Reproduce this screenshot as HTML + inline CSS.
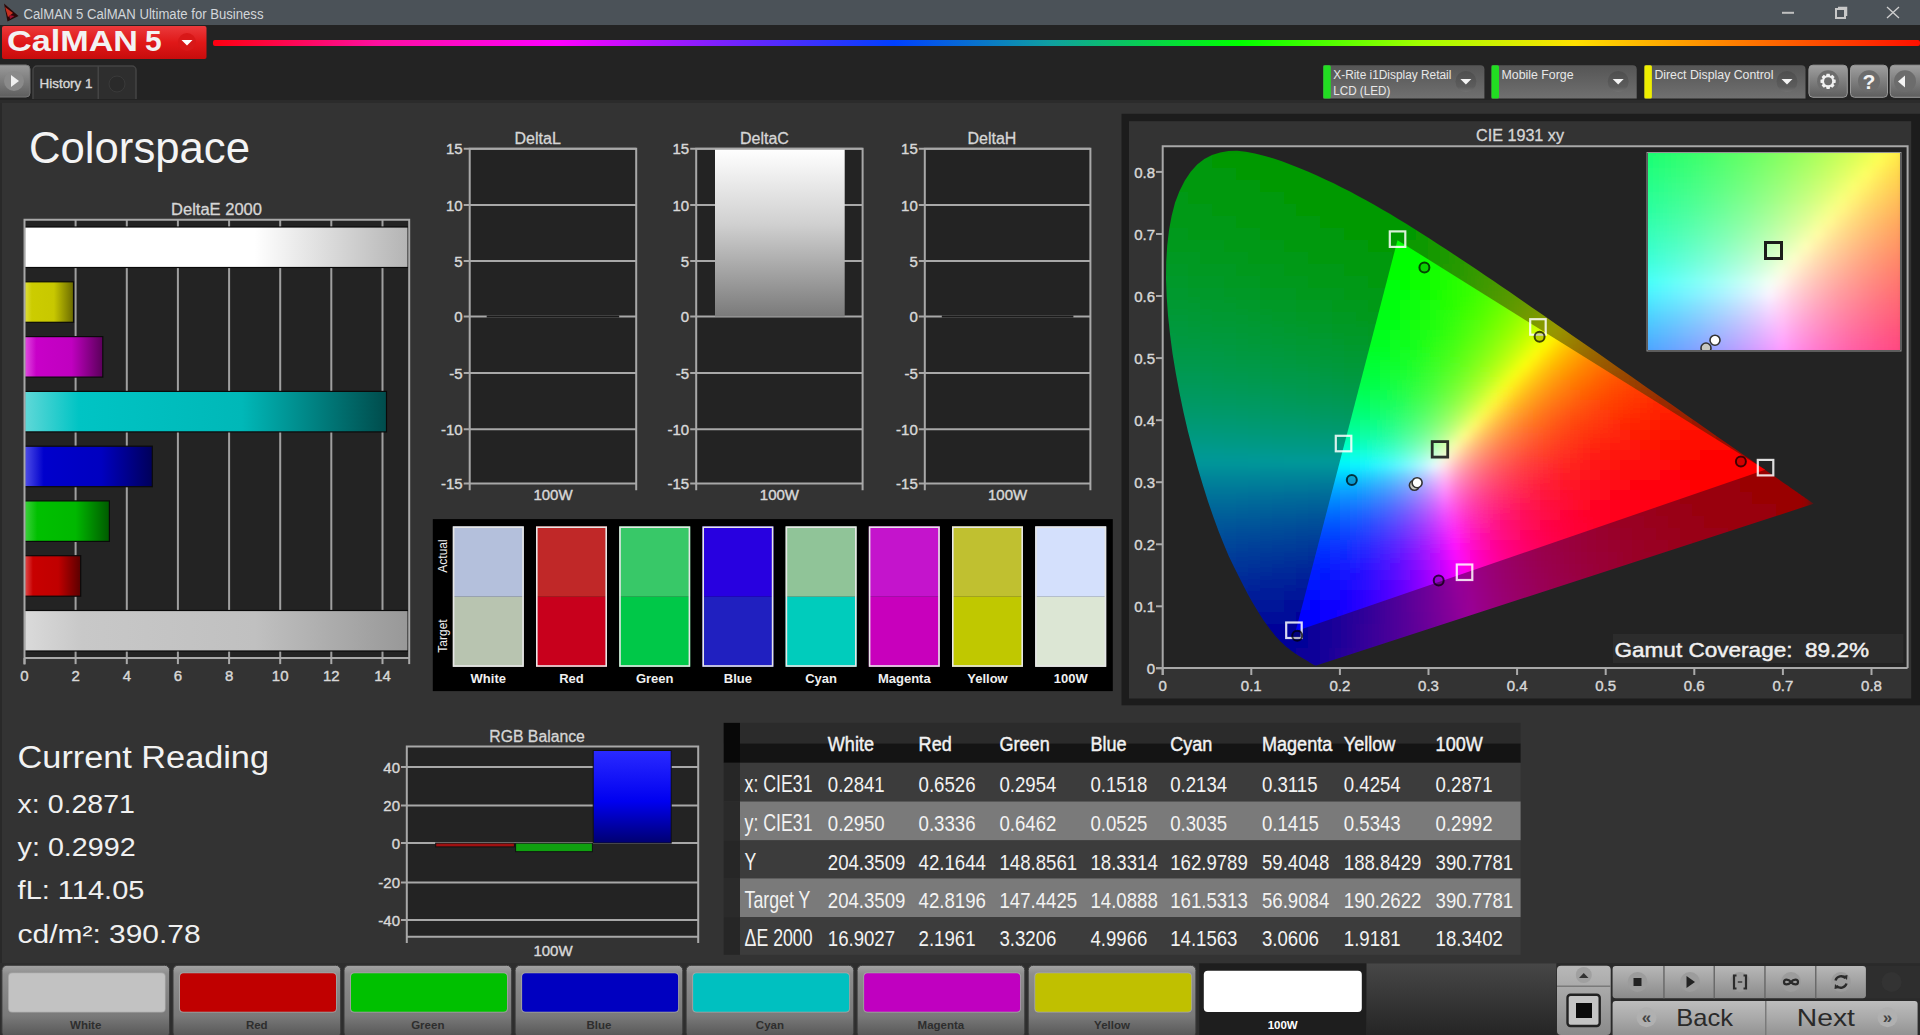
<!DOCTYPE html>
<html><head><meta charset="utf-8"><title>CalMAN</title>
<style>
html,body{margin:0;padding:0;background:#333;overflow:hidden;width:1920px;height:1035px}
svg{display:block;font-family:"Liberation Sans",sans-serif}
.ax{fill:#d8d8d8;font-size:15px;stroke:#d8d8d8;stroke-width:.4px}
.ttl{fill:#d6d6d6;font-size:16px;stroke:#d6d6d6;stroke-width:.3px}
.grid{stroke:#a8a8a8;stroke-width:2;fill:none}
.tb{fill:#f0f0f0;font-size:24px}
.bl{fill:#3a3a3a;font-size:11px;font-weight:bold}
</style></head><body>
<svg width="1920" height="1035" viewBox="0 0 1920 1035">
<defs>
<linearGradient id="spec" x1="213" y1="0" x2="1920" y2="0" gradientUnits="userSpaceOnUse">
<stop offset="0" stop-color="#ff0010"/><stop offset=".097" stop-color="#ff10a0"/><stop offset=".202" stop-color="#ff00ff"/><stop offset=".294" stop-color="#8020ff"/><stop offset=".399" stop-color="#0040ff"/><stop offset=".491" stop-color="#10a0a0"/><stop offset=".601" stop-color="#00ff00"/><stop offset=".706" stop-color="#a0ff00"/><stop offset=".798" stop-color="#ffe000"/><stop offset=".89" stop-color="#ff8000"/><stop offset="1" stop-color="#ff1000"/>
</linearGradient>
<linearGradient id="logoG" x1="0" y1="0" x2="0" y2="1"><stop offset="0" stop-color="#ea3a3c"/><stop offset=".5" stop-color="#e01818"/><stop offset="1" stop-color="#c80c0c"/></linearGradient>
<linearGradient id="btnG" x1="0" y1="0" x2="0" y2="1"><stop offset="0" stop-color="#9a9a9a"/><stop offset="1" stop-color="#5e5e5e"/></linearGradient>
<linearGradient id="ddG" x1="0" y1="0" x2="0" y2="1"><stop offset="0" stop-color="#5a5a5a"/><stop offset="1" stop-color="#6e6e6e"/></linearGradient>
</defs>

<!-- title bar -->
<rect x="0" y="0" width="1920" height="25.6" fill="#4b5258"/>
<path d="M4 3.5 L18.5 16 L7.5 21.5 Z" fill="#2a0808"/><path d="M5 7 L13 13 L8 17Z" fill="#c83020"/><path d="M9 15 L14.5 16 L10 19Z" fill="#a01030"/>
<text x="23.5" y="18.5" font-size="14" fill="#d2d6da" textLength="240" lengthAdjust="spacingAndGlyphs">CalMAN 5 CalMAN Ultimate for Business</text>
<rect x="1782" y="11.8" width="12" height="2" fill="#c0c0c0"/>
<rect x="1836" y="9" width="9" height="9" fill="none" stroke="#c8c8c8" stroke-width="2"/><path d="M1838 7.5h8.5v8.5" fill="none" stroke="#c8c8c8" stroke-width="1.5"/>
<path d="M1887 7 L1899 18 M1899 7 L1887 18" stroke="#d0d0d0" stroke-width="1.3"/>

<!-- logo bar -->
<rect x="0" y="25" width="1920" height="40" fill="#232323"/>
<rect x="2" y="26" width="204.5" height="33" rx="2" fill="url(#logoG)"/>
<text x="7" y="51" font-size="30" font-weight="bold" fill="#f2f2f2" textLength="131" lengthAdjust="spacingAndGlyphs">CalMAN</text>
<text x="145" y="51" font-size="30" font-weight="bold" fill="#f2f2f2">5</text>
<circle cx="187" cy="42" r="9" fill="#d81818"/>
<path d="M181.5 40 L192.5 40 L187 45.5Z" fill="#fff"/>
<rect x="213" y="40" width="1707" height="6" rx="2" fill="url(#spec)"/>

<!-- tab row -->
<rect x="0" y="65" width="1920" height="35" fill="#232323"/>
<rect x="0" y="100" width="1920" height="3" fill="#2b2b2b"/>
<rect x="-4" y="65" width="34" height="32" rx="4" fill="url(#btnG)" stroke="#777" stroke-width="1"/>
<circle cx="14" cy="81" r="10" fill="#8a8a8a"/>
<path d="M11 75 L19 81 L11 87Z" fill="#f0f0f0"/>
<path d="M33 99 V70 a4 4 0 0 1 4 -4 H132 a4 4 0 0 1 4 4 V99" fill="#2e2e2e" stroke="#444" stroke-width="1.5"/>
<rect x="97.5" y="66" width="1.5" height="33" fill="#444"/>
<text x="39.5" y="88" font-size="13" fill="#d8d8d8" stroke="#d8d8d8" stroke-width=".35" textLength="53" lengthAdjust="spacingAndGlyphs">History 1</text>
<circle cx="117" cy="84" r="8" fill="#2a2a2a" stroke="#3a3a3a" stroke-width="1"/>

<!-- content bg -->
<rect x="0" y="103" width="1920" height="860" fill="#333"/>
<rect x="0" y="103" width="2" height="860" fill="#292929"/>

<!-- Colorspace title -->
<text x="29" y="163" font-size="44" fill="#f4f4f4" textLength="221" lengthAdjust="spacingAndGlyphs">Colorspace</text>

<defs><linearGradient id="g_wh"><stop offset="0" stop-color="#ffffff"/><stop offset=".15" stop-color="#ffffff"/><stop offset=".6" stop-color="#ffffff"/><stop offset="1" stop-color="#b4b4b4"/></linearGradient><linearGradient id="g_ye"><stop offset="0" stop-color="#e0e040"/><stop offset=".15" stop-color="#cccc00"/><stop offset=".6" stop-color="#c8c800"/><stop offset="1" stop-color="#6a6a00"/></linearGradient><linearGradient id="g_ma"><stop offset="0" stop-color="#e050e0"/><stop offset=".15" stop-color="#c800c8"/><stop offset=".6" stop-color="#c000c0"/><stop offset="1" stop-color="#5a005a"/></linearGradient><linearGradient id="g_cy"><stop offset="0" stop-color="#60d8d8"/><stop offset=".15" stop-color="#00c4c4"/><stop offset=".6" stop-color="#00b8b8"/><stop offset="1" stop-color="#004c4c"/></linearGradient><linearGradient id="g_bu"><stop offset="0" stop-color="#5050e8"/><stop offset=".15" stop-color="#0000cc"/><stop offset=".6" stop-color="#0000c0"/><stop offset="1" stop-color="#00005a"/></linearGradient><linearGradient id="g_gr"><stop offset="0" stop-color="#40d040"/><stop offset=".15" stop-color="#00c000"/><stop offset=".6" stop-color="#00b800"/><stop offset="1" stop-color="#005a00"/></linearGradient><linearGradient id="g_re"><stop offset="0" stop-color="#e05050"/><stop offset=".15" stop-color="#c80000"/><stop offset=".6" stop-color="#c00000"/><stop offset="1" stop-color="#5a0000"/></linearGradient><linearGradient id="g_gy"><stop offset="0" stop-color="#dadada"/><stop offset=".15" stop-color="#c8c8c8"/><stop offset=".6" stop-color="#c0c0c0"/><stop offset="1" stop-color="#989898"/></linearGradient><linearGradient id="g_dc" x1="0" y1="0" x2="0" y2="1"><stop offset="0" stop-color="#ffffff"/><stop offset=".45" stop-color="#d0d0d0"/><stop offset="1" stop-color="#7a7a7a"/></linearGradient></defs><text class="ttl" x="171" y="215" textLength="91" lengthAdjust="spacingAndGlyphs">DeltaE 2000</text>
<rect x="24.5" y="219.8" width="384.7" height="438.3" fill="#232323"/>
<rect x="74.6" y="219.8" width="2" height="438.3" fill="#a0a0a0"/>
<rect x="125.8" y="219.8" width="2" height="438.3" fill="#a0a0a0"/>
<rect x="176.9" y="219.8" width="2" height="438.3" fill="#a0a0a0"/>
<rect x="228.1" y="219.8" width="2" height="438.3" fill="#a0a0a0"/>
<rect x="279.2" y="219.8" width="2" height="438.3" fill="#a0a0a0"/>
<rect x="330.3" y="219.8" width="2" height="438.3" fill="#a0a0a0"/>
<rect x="381.5" y="219.8" width="2" height="438.3" fill="#a0a0a0"/>
<rect x="24.5" y="227.0" width="383.6" height="40.5" fill="url(#g_wh)" stroke="#0a0a0a" stroke-width="1.2"/>
<rect x="24.5" y="281.8" width="49.0" height="40.5" fill="url(#g_ye)" stroke="#0a0a0a" stroke-width="1.2"/>
<rect x="24.5" y="336.6" width="78.3" height="40.5" fill="url(#g_ma)" stroke="#0a0a0a" stroke-width="1.2"/>
<rect x="24.5" y="391.4" width="362.0" height="40.5" fill="url(#g_cy)" stroke="#0a0a0a" stroke-width="1.2"/>
<rect x="24.5" y="446.2" width="127.8" height="40.5" fill="url(#g_bu)" stroke="#0a0a0a" stroke-width="1.2"/>
<rect x="24.5" y="500.9" width="84.9" height="40.5" fill="url(#g_gr)" stroke="#0a0a0a" stroke-width="1.2"/>
<rect x="24.5" y="555.7" width="56.2" height="40.5" fill="url(#g_re)" stroke="#0a0a0a" stroke-width="1.2"/>
<rect x="24.5" y="610.5" width="383.6" height="40.5" fill="url(#g_gy)" stroke="#0a0a0a" stroke-width="1.2"/>
<path d="M24.5 664.5 V219.8 H409.2 V658.1" class="grid"/>
<path d="M24.5 658.1 H409.2" class="grid"/>
<rect x="23.5" y="658.1" width="2" height="6" fill="#aaa"/>
<text class="ax" x="24.5" y="681.3" text-anchor="middle">0</text>
<rect x="74.6" y="658.1" width="2" height="6" fill="#aaa"/>
<text class="ax" x="75.6" y="681.3" text-anchor="middle">2</text>
<rect x="125.8" y="658.1" width="2" height="6" fill="#aaa"/>
<text class="ax" x="126.8" y="681.3" text-anchor="middle">4</text>
<rect x="176.9" y="658.1" width="2" height="6" fill="#aaa"/>
<text class="ax" x="177.9" y="681.3" text-anchor="middle">6</text>
<rect x="228.1" y="658.1" width="2" height="6" fill="#aaa"/>
<text class="ax" x="229.1" y="681.3" text-anchor="middle">8</text>
<rect x="279.2" y="658.1" width="2" height="6" fill="#aaa"/>
<text class="ax" x="280.2" y="681.3" text-anchor="middle">10</text>
<rect x="330.3" y="658.1" width="2" height="6" fill="#aaa"/>
<text class="ax" x="331.3" y="681.3" text-anchor="middle">12</text>
<rect x="381.5" y="658.1" width="2" height="6" fill="#aaa"/>
<text class="ax" x="382.5" y="681.3" text-anchor="middle">14</text>
<rect x="408.2" y="658.1" width="2" height="6" fill="#aaa"/>
<text class="ttl" x="537.7" y="143.7" text-anchor="middle">DeltaL</text>
<rect x="469.7" y="148.8" width="166.5" height="334.6" fill="#232323"/>
<path d="M463.7 148.8 H636.2" class="grid"/>
<text class="ax" x="462.7" y="154.3" text-anchor="end">15</text>
<path d="M463.7 205.0 H636.2" class="grid"/>
<text class="ax" x="462.7" y="210.5" text-anchor="end">10</text>
<path d="M463.7 261.0 H636.2" class="grid"/>
<text class="ax" x="462.7" y="266.5" text-anchor="end">5</text>
<path d="M463.7 316.5 H636.2" class="grid"/>
<text class="ax" x="462.7" y="322.0" text-anchor="end">0</text>
<path d="M463.7 373.0 H636.2" class="grid"/>
<text class="ax" x="462.7" y="378.5" text-anchor="end">-5</text>
<path d="M463.7 429.2 H636.2" class="grid"/>
<text class="ax" x="462.7" y="434.7" text-anchor="end">-10</text>
<path d="M463.7 483.4 H636.2" class="grid"/>
<text class="ax" x="462.7" y="488.9" text-anchor="end">-15</text>
<rect x="486.7" y="315.5" width="132.5" height="2" fill="#1a1a1a"/>
<path d="M469.7 490.3 V148.8 H636.2 V490.3" class="grid"/>
<text class="ax" x="553.0" y="500.4" text-anchor="middle">100W</text>
<text class="ttl" x="764.4" y="143.7" text-anchor="middle">DeltaC</text>
<rect x="696.2" y="148.8" width="166.4" height="334.6" fill="#232323"/>
<path d="M690.2 148.8 H862.6" class="grid"/>
<text class="ax" x="689.2" y="154.3" text-anchor="end">15</text>
<path d="M690.2 205.0 H862.6" class="grid"/>
<text class="ax" x="689.2" y="210.5" text-anchor="end">10</text>
<path d="M690.2 261.0 H862.6" class="grid"/>
<text class="ax" x="689.2" y="266.5" text-anchor="end">5</text>
<path d="M690.2 316.5 H862.6" class="grid"/>
<text class="ax" x="689.2" y="322.0" text-anchor="end">0</text>
<path d="M690.2 373.0 H862.6" class="grid"/>
<text class="ax" x="689.2" y="378.5" text-anchor="end">-5</text>
<path d="M690.2 429.2 H862.6" class="grid"/>
<text class="ax" x="689.2" y="434.7" text-anchor="end">-10</text>
<path d="M690.2 483.4 H862.6" class="grid"/>
<text class="ax" x="689.2" y="488.9" text-anchor="end">-15</text>
<rect x="715" y="148.8" width="129.7" height="167.7" fill="url(#g_dc)"/>
<path d="M696.2 490.3 V148.8 H862.6 V490.3" class="grid"/>
<text class="ax" x="779.4" y="500.4" text-anchor="middle">100W</text>
<text class="ttl" x="991.9" y="143.7" text-anchor="middle">DeltaH</text>
<rect x="924.8" y="148.8" width="165.6" height="334.6" fill="#232323"/>
<path d="M918.8 148.8 H1090.4" class="grid"/>
<text class="ax" x="917.8" y="154.3" text-anchor="end">15</text>
<path d="M918.8 205.0 H1090.4" class="grid"/>
<text class="ax" x="917.8" y="210.5" text-anchor="end">10</text>
<path d="M918.8 261.0 H1090.4" class="grid"/>
<text class="ax" x="917.8" y="266.5" text-anchor="end">5</text>
<path d="M918.8 316.5 H1090.4" class="grid"/>
<text class="ax" x="917.8" y="322.0" text-anchor="end">0</text>
<path d="M918.8 373.0 H1090.4" class="grid"/>
<text class="ax" x="917.8" y="378.5" text-anchor="end">-5</text>
<path d="M918.8 429.2 H1090.4" class="grid"/>
<text class="ax" x="917.8" y="434.7" text-anchor="end">-10</text>
<path d="M918.8 483.4 H1090.4" class="grid"/>
<text class="ax" x="917.8" y="488.9" text-anchor="end">-15</text>
<rect x="941.8" y="315.5" width="131.6" height="2" fill="#1a1a1a"/>
<path d="M924.8 490.3 V148.8 H1090.4 V490.3" class="grid"/>
<text class="ax" x="1007.6" y="500.4" text-anchor="middle">100W</text>
<rect x="432.8" y="519.1" width="680" height="172" fill="#000"/>
<rect x="452.8" y="526.4" width="71" height="70.4" fill="#b4c0dc"/>
<rect x="452.8" y="596.8" width="71" height="70" fill="#b8c4b0"/>
<rect x="453.6" y="527.2" width="69.4" height="138.8" fill="none" stroke="#e6e6e6" stroke-width="1.6"/>
<text x="488.3" y="683" font-size="13" font-weight="bold" fill="#f0f0f0" text-anchor="middle">White</text>
<rect x="536.0" y="526.4" width="71" height="70.4" fill="#c02828"/>
<rect x="536.0" y="596.8" width="71" height="70" fill="#c8001c"/>
<rect x="536.8" y="527.2" width="69.4" height="138.8" fill="none" stroke="#e6e6e6" stroke-width="1.6"/>
<text x="571.5" y="683" font-size="13" font-weight="bold" fill="#f0f0f0" text-anchor="middle">Red</text>
<rect x="619.2" y="526.4" width="71" height="70.4" fill="#38c868"/>
<rect x="619.2" y="596.8" width="71" height="70" fill="#00c848"/>
<rect x="620.0" y="527.2" width="69.4" height="138.8" fill="none" stroke="#e6e6e6" stroke-width="1.6"/>
<text x="654.7" y="683" font-size="13" font-weight="bold" fill="#f0f0f0" text-anchor="middle">Green</text>
<rect x="702.4" y="526.4" width="71" height="70.4" fill="#2800e0"/>
<rect x="702.4" y="596.8" width="71" height="70" fill="#2020c0"/>
<rect x="703.2" y="527.2" width="69.4" height="138.8" fill="none" stroke="#e6e6e6" stroke-width="1.6"/>
<text x="737.9" y="683" font-size="13" font-weight="bold" fill="#f0f0f0" text-anchor="middle">Blue</text>
<rect x="785.6" y="526.4" width="71" height="70.4" fill="#90c498"/>
<rect x="785.6" y="596.8" width="71" height="70" fill="#00ccbc"/>
<rect x="786.4" y="527.2" width="69.4" height="138.8" fill="none" stroke="#e6e6e6" stroke-width="1.6"/>
<text x="821.1" y="683" font-size="13" font-weight="bold" fill="#f0f0f0" text-anchor="middle">Cyan</text>
<rect x="868.8" y="526.4" width="71" height="70.4" fill="#c414cc"/>
<rect x="868.8" y="596.8" width="71" height="70" fill="#c800bc"/>
<rect x="869.6" y="527.2" width="69.4" height="138.8" fill="none" stroke="#e6e6e6" stroke-width="1.6"/>
<text x="904.3" y="683" font-size="13" font-weight="bold" fill="#f0f0f0" text-anchor="middle">Magenta</text>
<rect x="952.0" y="526.4" width="71" height="70.4" fill="#c0c030"/>
<rect x="952.0" y="596.8" width="71" height="70" fill="#c0c800"/>
<rect x="952.8" y="527.2" width="69.4" height="138.8" fill="none" stroke="#e6e6e6" stroke-width="1.6"/>
<text x="987.5" y="683" font-size="13" font-weight="bold" fill="#f0f0f0" text-anchor="middle">Yellow</text>
<rect x="1035.2" y="526.4" width="71" height="70.4" fill="#d4e0fc"/>
<rect x="1035.2" y="596.8" width="71" height="70" fill="#dce6d4"/>
<rect x="1036.0" y="527.2" width="69.4" height="138.8" fill="none" stroke="#e6e6e6" stroke-width="1.6"/>
<text x="1070.7" y="683" font-size="13" font-weight="bold" fill="#f0f0f0" text-anchor="middle">100W</text>
<text transform="translate(447,556) rotate(-90)" font-size="12" fill="#f0f0f0" text-anchor="middle">Actual</text>
<text transform="translate(447,636) rotate(-90)" font-size="12" fill="#f0f0f0" text-anchor="middle">Target</text><rect x="1121.5" y="113.8" width="798.5" height="591.5" fill="#1c1c1c"/>
<rect x="1129" y="121.2" width="782.2" height="577.3" fill="#333"/>
<text class="ttl" x="1476" y="141.3" textLength="88" lengthAdjust="spacingAndGlyphs">CIE 1931 xy</text>
<rect x="1162.7" y="146.3" width="745" height="521.8" fill="#232323"/>
<defs><clipPath id="clLoc"><path d="M1317.0 665.3L1316.9 665.3L1316.9 665.3L1316.9 665.3L1316.9 665.3L1316.8 665.3L1316.8 665.3L1316.7 665.3L1316.7 665.4L1316.6 665.4L1316.6 665.4L1316.6 665.4L1316.5 665.4L1316.4 665.4L1316.4 665.4L1316.3 665.4L1316.2 665.4L1316.2 665.4L1316.1 665.4L1316.1 665.4L1316.0 665.4L1315.9 665.4L1315.8 665.4L1315.7 665.4L1315.6 665.4L1315.5 665.4L1315.4 665.4L1315.3 665.4L1315.2 665.4L1315.0 665.4L1314.9 665.4L1314.7 665.3L1314.6 665.2L1314.3 665.1L1314.1 665.0L1313.9 664.9L1313.6 664.8L1313.3 664.7L1313.0 664.5L1312.7 664.3L1312.3 664.1L1312.0 663.9L1311.5 663.6L1311.1 663.4L1310.6 663.1L1310.1 662.7L1309.5 662.4L1309.0 662.0L1308.4 661.6L1307.7 661.2L1307.0 660.8L1306.3 660.3L1305.4 659.8L1304.5 659.3L1303.6 658.7L1302.5 658.1L1301.4 657.4L1300.3 656.7L1299.1 656.0L1297.8 655.2L1296.5 654.3L1295.1 653.4L1293.5 652.3L1292.0 651.2L1290.3 650.0L1288.6 648.6L1286.8 647.2L1284.8 645.6L1282.8 643.6L1280.5 641.4L1278.0 638.8L1275.4 635.9L1272.7 632.5L1269.7 628.8L1266.6 624.6L1263.3 619.9L1259.8 614.5L1256.1 608.5L1252.1 601.8L1248.0 594.4L1243.6 586.0L1238.9 576.8L1233.9 566.8L1228.7 555.9L1223.6 543.8L1218.4 530.7L1213.2 516.5L1208.0 501.4L1202.9 485.3L1197.8 468.2L1192.8 450.0L1187.9 431.2L1183.5 412.3L1179.5 393.0L1175.8 373.2L1172.5 353.5L1170.0 334.3L1168.0 315.5L1166.7 297.0L1166.0 279.0L1166.2 262.0L1167.2 245.8L1169.0 230.3L1171.6 215.9L1175.0 202.8L1179.4 191.2L1184.7 180.8L1190.7 171.8L1197.2 164.5L1204.3 158.9L1212.0 155.0L1220.2 152.5L1228.5 150.9L1237.1 150.7L1245.9 151.7L1254.9 153.5L1263.9 155.7L1272.9 158.2L1281.9 161.3L1290.9 164.7L1299.8 168.3L1308.4 171.8L1316.9 175.5L1325.3 179.4L1333.6 183.3L1341.8 187.4L1350.0 191.6L1358.1 195.9L1366.1 200.3L1374.2 204.8L1382.2 209.4L1390.2 214.1L1398.2 218.9L1406.2 223.8L1414.1 228.7L1422.0 233.7L1429.9 238.8L1437.8 243.9L1445.7 249.0L1453.6 254.2L1461.5 259.5L1469.5 264.8L1477.4 270.1L1485.3 275.5L1493.3 280.8L1501.2 286.2L1509.1 291.6L1516.9 297.1L1524.8 302.5L1532.7 307.9L1540.5 313.3L1548.4 318.8L1556.2 324.2L1563.9 329.5L1571.6 334.9L1579.3 340.3L1586.9 345.6L1594.5 350.8L1602.0 356.1L1609.4 361.3L1616.8 366.4L1624.1 371.5L1631.3 376.5L1638.4 381.5L1645.4 386.4L1652.3 391.2L1659.1 395.9L1665.8 400.6L1672.3 405.1L1678.7 409.6L1684.9 414.0L1691.0 418.2L1696.9 422.3L1702.5 426.3L1707.9 430.0L1713.1 433.7L1718.2 437.2L1723.2 440.7L1728.0 444.0L1732.6 447.3L1737.0 450.3L1741.2 453.2L1745.2 456.0L1749.0 458.6L1752.6 461.1L1756.0 463.5L1759.3 465.8L1762.4 467.9L1765.3 470.0L1768.0 471.9L1770.6 473.7L1773.0 475.4L1775.4 477.1L1777.6 478.6L1779.6 480.0L1781.6 481.4L1783.4 482.7L1785.2 483.9L1786.8 485.0L1788.4 486.1L1789.9 487.2L1791.3 488.2L1792.7 489.2L1794.0 490.1L1795.3 491.0L1796.5 491.8L1797.6 492.6L1798.7 493.4L1799.7 494.1L1800.7 494.7L1801.6 495.4L1802.5 495.9L1803.3 496.5L1804.0 497.0L1804.7 497.5L1805.3 497.9L1805.9 498.4L1806.5 498.8L1807.0 499.1L1807.5 499.5L1808.0 499.8L1808.4 500.1L1808.8 500.4L1809.2 500.6L1809.5 500.8L1809.8 501.0L1810.0 501.2L1810.2 501.4L1810.5 501.5L1810.7 501.7L1810.9 501.8L1811.1 502.0L1811.3 502.1L1811.4 502.2L1811.6 502.3L1811.7 502.4L1811.9 502.5L1812.0 502.6L1812.2 502.7L1812.3 502.8L1812.5 502.9L1812.6 503.0L1812.8 503.1L1812.9 503.2L1813.0 503.3L1813.1 503.4L1813.2 503.5L1813.3 503.5L1813.4 503.6L1813.4 503.6L1813.5 503.6L1813.5 503.7L1813.6 503.7L1813.6 503.7L1813.6 503.7L1813.6 503.7L1813.6 503.8Z"/></clipPath><clipPath id="clTri"><path d="M1765.2 469.8L1397.5 240.2L1295.6 631.2Z"/></clipPath><filter id="bl12" x="-5%" y="-5%" width="110%" height="110%"><feGaussianBlur stdDeviation="5"/></filter><filter id="bl8" x="-5%" y="-5%" width="110%" height="110%"><feGaussianBlur stdDeviation="5"/></filter><clipPath id="clIns"><rect x="1648" y="153" width="252" height="197"/></clipPath><style>.o rect{width:12px;height:12px}.i rect{width:10px;height:10px}.n rect{width:12px;height:12px}</style></defs><g clip-path="url(#clLoc)"><g class="o" filter="url(#bl12)"><rect x="1188" y="144" fill="#009906"/><rect x="1200" y="144" fill="#009905"/><rect x="1212" y="144" fill="#009904"/><rect x="1224" y="144" fill="#009903"/><rect x="1236" y="144" fill="#009901"/><rect x="1248" y="144" fill="#009900"/><rect x="1260" y="144" fill="#009900"/><rect x="1272" y="144" fill="#009900"/><rect x="1284" y="144" fill="#009900"/><rect x="1176" y="156" fill="#00990a"/><rect x="1188" y="156" fill="#009909"/><rect x="1200" y="156" fill="#009908"/><rect x="1212" y="156" fill="#009906"/><rect x="1224" y="156" fill="#009905"/><rect x="1236" y="156" fill="#009904"/><rect x="1248" y="156" fill="#009902"/><rect x="1260" y="156" fill="#009901"/><rect x="1272" y="156" fill="#009900"/><rect x="1284" y="156" fill="#009900"/><rect x="1296" y="156" fill="#009900"/><rect x="1308" y="156" fill="#009900"/><rect x="1176" y="168" fill="#00990d"/><rect x="1188" y="168" fill="#00990b"/><rect x="1200" y="168" fill="#00990a"/><rect x="1212" y="168" fill="#009909"/><rect x="1224" y="168" fill="#009907"/><rect x="1236" y="168" fill="#009906"/><rect x="1248" y="168" fill="#009905"/><rect x="1260" y="168" fill="#009903"/><rect x="1272" y="168" fill="#009902"/><rect x="1284" y="168" fill="#009900"/><rect x="1296" y="168" fill="#009900"/><rect x="1308" y="168" fill="#009900"/><rect x="1320" y="168" fill="#009900"/><rect x="1332" y="168" fill="#009900"/><rect x="1344" y="168" fill="#009900"/><rect x="1164" y="180" fill="#009910"/><rect x="1176" y="180" fill="#00990f"/><rect x="1188" y="180" fill="#00990e"/><rect x="1200" y="180" fill="#00990c"/><rect x="1212" y="180" fill="#00990b"/><rect x="1224" y="180" fill="#00990a"/><rect x="1236" y="180" fill="#009908"/><rect x="1248" y="180" fill="#009907"/><rect x="1260" y="180" fill="#009906"/><rect x="1272" y="180" fill="#009904"/><rect x="1284" y="180" fill="#009903"/><rect x="1296" y="180" fill="#009901"/><rect x="1308" y="180" fill="#009900"/><rect x="1320" y="180" fill="#009900"/><rect x="1332" y="180" fill="#009900"/><rect x="1344" y="180" fill="#009900"/><rect x="1356" y="180" fill="#009900"/><rect x="1164" y="192" fill="#009913"/><rect x="1176" y="192" fill="#009912"/><rect x="1188" y="192" fill="#009910"/><rect x="1200" y="192" fill="#00990f"/><rect x="1212" y="192" fill="#00990e"/><rect x="1224" y="192" fill="#00990c"/><rect x="1236" y="192" fill="#00990b"/><rect x="1248" y="192" fill="#00990a"/><rect x="1260" y="192" fill="#009908"/><rect x="1272" y="192" fill="#009907"/><rect x="1284" y="192" fill="#009905"/><rect x="1296" y="192" fill="#009904"/><rect x="1308" y="192" fill="#009902"/><rect x="1320" y="192" fill="#009901"/><rect x="1332" y="192" fill="#009900"/><rect x="1344" y="192" fill="#009900"/><rect x="1356" y="192" fill="#009900"/><rect x="1368" y="192" fill="#009900"/><rect x="1380" y="192" fill="#009900"/><rect x="1164" y="204" fill="#009916"/><rect x="1176" y="204" fill="#009915"/><rect x="1188" y="204" fill="#009913"/><rect x="1200" y="204" fill="#009912"/><rect x="1212" y="204" fill="#009911"/><rect x="1224" y="204" fill="#00990f"/><rect x="1236" y="204" fill="#00990e"/><rect x="1248" y="204" fill="#00990c"/><rect x="1260" y="204" fill="#00990b"/><rect x="1272" y="204" fill="#009909"/><rect x="1284" y="204" fill="#009908"/><rect x="1296" y="204" fill="#009906"/><rect x="1308" y="204" fill="#009905"/><rect x="1320" y="204" fill="#009903"/><rect x="1332" y="204" fill="#009902"/><rect x="1344" y="204" fill="#009900"/><rect x="1356" y="204" fill="#009900"/><rect x="1368" y="204" fill="#009900"/><rect x="1380" y="204" fill="#009900"/><rect x="1392" y="204" fill="#009900"/><rect x="1404" y="204" fill="#029900"/><rect x="1152" y="216" fill="#00991a"/><rect x="1164" y="216" fill="#009919"/><rect x="1176" y="216" fill="#009918"/><rect x="1188" y="216" fill="#009916"/><rect x="1200" y="216" fill="#009915"/><rect x="1212" y="216" fill="#009914"/><rect x="1224" y="216" fill="#009912"/><rect x="1236" y="216" fill="#009911"/><rect x="1248" y="216" fill="#00990f"/><rect x="1260" y="216" fill="#00990e"/><rect x="1272" y="216" fill="#00990c"/><rect x="1284" y="216" fill="#00990b"/><rect x="1296" y="216" fill="#009909"/><rect x="1308" y="216" fill="#009908"/><rect x="1320" y="216" fill="#009906"/><rect x="1332" y="216" fill="#009904"/><rect x="1344" y="216" fill="#009903"/><rect x="1356" y="216" fill="#009901"/><rect x="1368" y="216" fill="#009900"/><rect x="1380" y="216" fill="#009900"/><rect x="1392" y="216" fill="#009900"/><rect x="1404" y="216" fill="#049900"/><rect x="1416" y="216" fill="#0a9900"/><rect x="1428" y="216" fill="#109900"/><rect x="1152" y="228" fill="#00991d"/><rect x="1164" y="228" fill="#00991c"/><rect x="1176" y="228" fill="#00991b"/><rect x="1188" y="228" fill="#009919"/><rect x="1200" y="228" fill="#009918"/><rect x="1212" y="228" fill="#009917"/><rect x="1224" y="228" fill="#009915"/><rect x="1236" y="228" fill="#009914"/><rect x="1248" y="228" fill="#009912"/><rect x="1260" y="228" fill="#009911"/><rect x="1272" y="228" fill="#00990f"/><rect x="1284" y="228" fill="#00990e"/><rect x="1296" y="228" fill="#00990c"/><rect x="1308" y="228" fill="#00990b"/><rect x="1320" y="228" fill="#009909"/><rect x="1332" y="228" fill="#009907"/><rect x="1344" y="228" fill="#009906"/><rect x="1356" y="228" fill="#009904"/><rect x="1368" y="228" fill="#009902"/><rect x="1380" y="228" fill="#009900"/><rect x="1392" y="228" fill="#009900"/><rect x="1404" y="228" fill="#059900"/><rect x="1416" y="228" fill="#0c9900"/><rect x="1428" y="228" fill="#129900"/><rect x="1440" y="228" fill="#189900"/><rect x="1152" y="240" fill="#009921"/><rect x="1164" y="240" fill="#00991f"/><rect x="1176" y="240" fill="#00991e"/><rect x="1188" y="240" fill="#00991d"/><rect x="1200" y="240" fill="#00991b"/><rect x="1212" y="240" fill="#00991a"/><rect x="1224" y="240" fill="#009919"/><rect x="1236" y="240" fill="#009917"/><rect x="1248" y="240" fill="#009916"/><rect x="1260" y="240" fill="#009914"/><rect x="1272" y="240" fill="#009913"/><rect x="1284" y="240" fill="#009911"/><rect x="1296" y="240" fill="#009910"/><rect x="1308" y="240" fill="#00990e"/><rect x="1320" y="240" fill="#00990c"/><rect x="1332" y="240" fill="#00990b"/><rect x="1344" y="240" fill="#009909"/><rect x="1356" y="240" fill="#009907"/><rect x="1368" y="240" fill="#009905"/><rect x="1380" y="240" fill="#009903"/><rect x="1392" y="240" fill="#019901"/><rect x="1404" y="240" fill="#079900"/><rect x="1416" y="240" fill="#0e9900"/><rect x="1428" y="240" fill="#149900"/><rect x="1440" y="240" fill="#1b9900"/><rect x="1452" y="240" fill="#229900"/><rect x="1464" y="240" fill="#299900"/><rect x="1152" y="252" fill="#009924"/><rect x="1164" y="252" fill="#009923"/><rect x="1176" y="252" fill="#009922"/><rect x="1188" y="252" fill="#009920"/><rect x="1200" y="252" fill="#00991f"/><rect x="1212" y="252" fill="#00991e"/><rect x="1224" y="252" fill="#00991c"/><rect x="1236" y="252" fill="#00991b"/><rect x="1248" y="252" fill="#009919"/><rect x="1260" y="252" fill="#009918"/><rect x="1272" y="252" fill="#009916"/><rect x="1284" y="252" fill="#009915"/><rect x="1296" y="252" fill="#009913"/><rect x="1308" y="252" fill="#009911"/><rect x="1320" y="252" fill="#009910"/><rect x="1332" y="252" fill="#00990e"/><rect x="1344" y="252" fill="#00990c"/><rect x="1356" y="252" fill="#00990a"/><rect x="1368" y="252" fill="#009909"/><rect x="1380" y="252" fill="#009907"/><rect x="1392" y="252" fill="#039905"/><rect x="1404" y="252" fill="#099903"/><rect x="1416" y="252" fill="#109901"/><rect x="1428" y="252" fill="#179900"/><rect x="1440" y="252" fill="#1e9900"/><rect x="1452" y="252" fill="#259900"/><rect x="1464" y="252" fill="#2c9900"/><rect x="1476" y="252" fill="#339900"/><rect x="1152" y="264" fill="#009928"/><rect x="1164" y="264" fill="#009927"/><rect x="1176" y="264" fill="#009925"/><rect x="1188" y="264" fill="#009924"/><rect x="1200" y="264" fill="#009923"/><rect x="1212" y="264" fill="#009921"/><rect x="1224" y="264" fill="#009920"/><rect x="1236" y="264" fill="#00991e"/><rect x="1248" y="264" fill="#00991d"/><rect x="1260" y="264" fill="#00991b"/><rect x="1272" y="264" fill="#00991a"/><rect x="1284" y="264" fill="#009918"/><rect x="1296" y="264" fill="#009917"/><rect x="1308" y="264" fill="#009915"/><rect x="1320" y="264" fill="#009913"/><rect x="1332" y="264" fill="#009912"/><rect x="1344" y="264" fill="#009910"/><rect x="1356" y="264" fill="#00990e"/><rect x="1368" y="264" fill="#00990c"/><rect x="1380" y="264" fill="#00990a"/><rect x="1392" y="264" fill="#059908"/><rect x="1404" y="264" fill="#0b9906"/><rect x="1416" y="264" fill="#129904"/><rect x="1428" y="264" fill="#199902"/><rect x="1440" y="264" fill="#209900"/><rect x="1452" y="264" fill="#289900"/><rect x="1464" y="264" fill="#309900"/><rect x="1476" y="264" fill="#379900"/><rect x="1488" y="264" fill="#409900"/><rect x="1500" y="264" fill="#489900"/><rect x="1152" y="276" fill="#00992c"/><rect x="1164" y="276" fill="#00992b"/><rect x="1176" y="276" fill="#009929"/><rect x="1188" y="276" fill="#009928"/><rect x="1200" y="276" fill="#009927"/><rect x="1212" y="276" fill="#009925"/><rect x="1224" y="276" fill="#009924"/><rect x="1236" y="276" fill="#009922"/><rect x="1248" y="276" fill="#009921"/><rect x="1260" y="276" fill="#00991f"/><rect x="1272" y="276" fill="#00991e"/><rect x="1284" y="276" fill="#00991c"/><rect x="1296" y="276" fill="#00991b"/><rect x="1308" y="276" fill="#009919"/><rect x="1320" y="276" fill="#009917"/><rect x="1332" y="276" fill="#009915"/><rect x="1344" y="276" fill="#009914"/><rect x="1356" y="276" fill="#009912"/><rect x="1368" y="276" fill="#009910"/><rect x="1380" y="276" fill="#00990e"/><rect x="1392" y="276" fill="#06990c"/><rect x="1404" y="276" fill="#0d990a"/><rect x="1416" y="276" fill="#159908"/><rect x="1428" y="276" fill="#1c9906"/><rect x="1440" y="276" fill="#249904"/><rect x="1452" y="276" fill="#2b9901"/><rect x="1464" y="276" fill="#339900"/><rect x="1476" y="276" fill="#3c9900"/><rect x="1488" y="276" fill="#449900"/><rect x="1500" y="276" fill="#4d9900"/><rect x="1512" y="276" fill="#569900"/><rect x="1152" y="288" fill="#009930"/><rect x="1164" y="288" fill="#00992f"/><rect x="1176" y="288" fill="#00992e"/><rect x="1188" y="288" fill="#00992c"/><rect x="1200" y="288" fill="#00992b"/><rect x="1212" y="288" fill="#009929"/><rect x="1224" y="288" fill="#009928"/><rect x="1236" y="288" fill="#009927"/><rect x="1248" y="288" fill="#009925"/><rect x="1260" y="288" fill="#009924"/><rect x="1272" y="288" fill="#009922"/><rect x="1284" y="288" fill="#009920"/><rect x="1296" y="288" fill="#00991f"/><rect x="1308" y="288" fill="#00991d"/><rect x="1320" y="288" fill="#00991b"/><rect x="1332" y="288" fill="#00991a"/><rect x="1344" y="288" fill="#009918"/><rect x="1356" y="288" fill="#009916"/><rect x="1368" y="288" fill="#009914"/><rect x="1380" y="288" fill="#019912"/><rect x="1392" y="288" fill="#099910"/><rect x="1404" y="288" fill="#10990e"/><rect x="1416" y="288" fill="#17990c"/><rect x="1428" y="288" fill="#1f990a"/><rect x="1440" y="288" fill="#279907"/><rect x="1452" y="288" fill="#2f9905"/><rect x="1464" y="288" fill="#389903"/><rect x="1476" y="288" fill="#409900"/><rect x="1488" y="288" fill="#499900"/><rect x="1500" y="288" fill="#539900"/><rect x="1512" y="288" fill="#5c9900"/><rect x="1524" y="288" fill="#669900"/><rect x="1152" y="300" fill="#009935"/><rect x="1164" y="300" fill="#009933"/><rect x="1176" y="300" fill="#009932"/><rect x="1188" y="300" fill="#009931"/><rect x="1200" y="300" fill="#00992f"/><rect x="1212" y="300" fill="#00992e"/><rect x="1224" y="300" fill="#00992d"/><rect x="1236" y="300" fill="#00992b"/><rect x="1248" y="300" fill="#00992a"/><rect x="1260" y="300" fill="#009928"/><rect x="1272" y="300" fill="#009927"/><rect x="1284" y="300" fill="#009925"/><rect x="1296" y="300" fill="#009923"/><rect x="1308" y="300" fill="#009922"/><rect x="1320" y="300" fill="#009920"/><rect x="1332" y="300" fill="#00991e"/><rect x="1344" y="300" fill="#00991c"/><rect x="1356" y="300" fill="#00991a"/><rect x="1368" y="300" fill="#009919"/><rect x="1380" y="300" fill="#039917"/><rect x="1392" y="300" fill="#0b9915"/><rect x="1404" y="300" fill="#139912"/><rect x="1440" y="300" fill="#2b990c"/><rect x="1452" y="300" fill="#339909"/><rect x="1464" y="300" fill="#3c9907"/><rect x="1476" y="300" fill="#459905"/><rect x="1488" y="300" fill="#4f9902"/><rect x="1500" y="300" fill="#599900"/><rect x="1512" y="300" fill="#639900"/><rect x="1524" y="300" fill="#6d9900"/><rect x="1536" y="300" fill="#789900"/><rect x="1548" y="300" fill="#839900"/><rect x="1152" y="312" fill="#009939"/><rect x="1164" y="312" fill="#009938"/><rect x="1176" y="312" fill="#009937"/><rect x="1188" y="312" fill="#009936"/><rect x="1200" y="312" fill="#009934"/><rect x="1212" y="312" fill="#009933"/><rect x="1224" y="312" fill="#009931"/><rect x="1236" y="312" fill="#009930"/><rect x="1248" y="312" fill="#00992e"/><rect x="1260" y="312" fill="#00992d"/><rect x="1272" y="312" fill="#00992b"/><rect x="1284" y="312" fill="#00992a"/><rect x="1296" y="312" fill="#009928"/><rect x="1308" y="312" fill="#009926"/><rect x="1320" y="312" fill="#009925"/><rect x="1332" y="312" fill="#009923"/><rect x="1344" y="312" fill="#009921"/><rect x="1356" y="312" fill="#00991f"/><rect x="1368" y="312" fill="#00991d"/><rect x="1380" y="312" fill="#06991b"/><rect x="1392" y="312" fill="#0d9919"/><rect x="1464" y="312" fill="#41990c"/><rect x="1476" y="312" fill="#4b9909"/><rect x="1488" y="312" fill="#559907"/><rect x="1500" y="312" fill="#5f9904"/><rect x="1512" y="312" fill="#6a9901"/><rect x="1524" y="312" fill="#759900"/><rect x="1536" y="312" fill="#819900"/><rect x="1548" y="312" fill="#8d9900"/><rect x="1560" y="312" fill="#999900"/><rect x="1152" y="324" fill="#00993e"/><rect x="1164" y="324" fill="#00993d"/><rect x="1176" y="324" fill="#00993c"/><rect x="1188" y="324" fill="#00993b"/><rect x="1200" y="324" fill="#009939"/><rect x="1212" y="324" fill="#009938"/><rect x="1224" y="324" fill="#009937"/><rect x="1236" y="324" fill="#009935"/><rect x="1248" y="324" fill="#009934"/><rect x="1260" y="324" fill="#009932"/><rect x="1272" y="324" fill="#009931"/><rect x="1284" y="324" fill="#00992f"/><rect x="1296" y="324" fill="#00992d"/><rect x="1308" y="324" fill="#00992c"/><rect x="1320" y="324" fill="#00992a"/><rect x="1332" y="324" fill="#009928"/><rect x="1344" y="324" fill="#009926"/><rect x="1356" y="324" fill="#009925"/><rect x="1368" y="324" fill="#009923"/><rect x="1380" y="324" fill="#089921"/><rect x="1392" y="324" fill="#10991f"/><rect x="1476" y="324" fill="#51990e"/><rect x="1488" y="324" fill="#5c990c"/><rect x="1500" y="324" fill="#679909"/><rect x="1512" y="324" fill="#729906"/><rect x="1524" y="324" fill="#7e9903"/><rect x="1536" y="324" fill="#8a9900"/><rect x="1548" y="324" fill="#979900"/><rect x="1560" y="324" fill="#998e00"/><rect x="1572" y="324" fill="#998300"/><rect x="1584" y="324" fill="#997900"/><rect x="1152" y="336" fill="#009944"/><rect x="1164" y="336" fill="#009943"/><rect x="1176" y="336" fill="#009941"/><rect x="1188" y="336" fill="#009940"/><rect x="1200" y="336" fill="#00993f"/><rect x="1212" y="336" fill="#00993e"/><rect x="1224" y="336" fill="#00993c"/><rect x="1236" y="336" fill="#00993b"/><rect x="1248" y="336" fill="#009939"/><rect x="1260" y="336" fill="#009938"/><rect x="1272" y="336" fill="#009936"/><rect x="1284" y="336" fill="#009935"/><rect x="1296" y="336" fill="#009933"/><rect x="1308" y="336" fill="#009931"/><rect x="1320" y="336" fill="#009930"/><rect x="1332" y="336" fill="#00992e"/><rect x="1344" y="336" fill="#00992c"/><rect x="1356" y="336" fill="#00992a"/><rect x="1368" y="336" fill="#029928"/><rect x="1380" y="336" fill="#0a9926"/><rect x="1392" y="336" fill="#139924"/><rect x="1500" y="336" fill="#6f990e"/><rect x="1512" y="336" fill="#7b990b"/><rect x="1524" y="336" fill="#889908"/><rect x="1536" y="336" fill="#959905"/><rect x="1548" y="336" fill="#999002"/><rect x="1560" y="336" fill="#998400"/><rect x="1572" y="336" fill="#997a00"/><rect x="1584" y="336" fill="#997100"/><rect x="1596" y="336" fill="#996800"/><rect x="1164" y="348" fill="#009949"/><rect x="1176" y="348" fill="#009947"/><rect x="1188" y="348" fill="#009946"/><rect x="1200" y="348" fill="#009945"/><rect x="1212" y="348" fill="#009944"/><rect x="1224" y="348" fill="#009942"/><rect x="1236" y="348" fill="#009941"/><rect x="1248" y="348" fill="#00993f"/><rect x="1260" y="348" fill="#00993e"/><rect x="1272" y="348" fill="#00993c"/><rect x="1284" y="348" fill="#00993b"/><rect x="1296" y="348" fill="#009939"/><rect x="1308" y="348" fill="#009938"/><rect x="1320" y="348" fill="#009936"/><rect x="1332" y="348" fill="#009934"/><rect x="1344" y="348" fill="#009932"/><rect x="1356" y="348" fill="#009931"/><rect x="1368" y="348" fill="#04992f"/><rect x="1380" y="348" fill="#0d992d"/><rect x="1392" y="348" fill="#16992b"/><rect x="1512" y="348" fill="#869911"/><rect x="1524" y="348" fill="#93990e"/><rect x="1536" y="348" fill="#99910b"/><rect x="1548" y="348" fill="#998507"/><rect x="1560" y="348" fill="#997a03"/><rect x="1572" y="348" fill="#997000"/><rect x="1584" y="348" fill="#996800"/><rect x="1596" y="348" fill="#996000"/><rect x="1608" y="348" fill="#995900"/><rect x="1620" y="348" fill="#995300"/><rect x="1164" y="360" fill="#00994f"/><rect x="1176" y="360" fill="#00994e"/><rect x="1188" y="360" fill="#00994d"/><rect x="1200" y="360" fill="#00994b"/><rect x="1212" y="360" fill="#00994a"/><rect x="1224" y="360" fill="#009949"/><rect x="1236" y="360" fill="#009947"/><rect x="1248" y="360" fill="#009946"/><rect x="1260" y="360" fill="#009945"/><rect x="1272" y="360" fill="#009943"/><rect x="1284" y="360" fill="#009942"/><rect x="1296" y="360" fill="#009940"/><rect x="1308" y="360" fill="#00993e"/><rect x="1320" y="360" fill="#00993d"/><rect x="1332" y="360" fill="#00993b"/><rect x="1344" y="360" fill="#009939"/><rect x="1356" y="360" fill="#009937"/><rect x="1368" y="360" fill="#079936"/><rect x="1380" y="360" fill="#109934"/><rect x="1536" y="360" fill="#998610"/><rect x="1548" y="360" fill="#997a0c"/><rect x="1560" y="360" fill="#997008"/><rect x="1572" y="360" fill="#996705"/><rect x="1584" y="360" fill="#995f02"/><rect x="1596" y="360" fill="#995800"/><rect x="1608" y="360" fill="#995200"/><rect x="1620" y="360" fill="#994c00"/><rect x="1632" y="360" fill="#994700"/><rect x="1164" y="372" fill="#009956"/><rect x="1176" y="372" fill="#009955"/><rect x="1188" y="372" fill="#009954"/><rect x="1200" y="372" fill="#009952"/><rect x="1212" y="372" fill="#009951"/><rect x="1224" y="372" fill="#009950"/><rect x="1236" y="372" fill="#00994f"/><rect x="1248" y="372" fill="#00994d"/><rect x="1260" y="372" fill="#00994c"/><rect x="1272" y="372" fill="#00994a"/><rect x="1284" y="372" fill="#009949"/><rect x="1296" y="372" fill="#009948"/><rect x="1308" y="372" fill="#009946"/><rect x="1320" y="372" fill="#009944"/><rect x="1332" y="372" fill="#009943"/><rect x="1344" y="372" fill="#009941"/><rect x="1356" y="372" fill="#00993f"/><rect x="1368" y="372" fill="#0a993d"/><rect x="1380" y="372" fill="#14993b"/><rect x="1560" y="372" fill="#99670c"/><rect x="1572" y="372" fill="#995f09"/><rect x="1584" y="372" fill="#995706"/><rect x="1596" y="372" fill="#995103"/><rect x="1608" y="372" fill="#994b01"/><rect x="1620" y="372" fill="#994500"/><rect x="1632" y="372" fill="#994000"/><rect x="1644" y="372" fill="#993c00"/><rect x="1656" y="372" fill="#993800"/><rect x="1164" y="384" fill="#00995d"/><rect x="1176" y="384" fill="#00995c"/><rect x="1188" y="384" fill="#00995b"/><rect x="1200" y="384" fill="#00995a"/><rect x="1212" y="384" fill="#009959"/><rect x="1224" y="384" fill="#009958"/><rect x="1236" y="384" fill="#009956"/><rect x="1248" y="384" fill="#009955"/><rect x="1260" y="384" fill="#009954"/><rect x="1272" y="384" fill="#009953"/><rect x="1284" y="384" fill="#009951"/><rect x="1296" y="384" fill="#009950"/><rect x="1308" y="384" fill="#00994e"/><rect x="1320" y="384" fill="#00994d"/><rect x="1332" y="384" fill="#00994b"/><rect x="1344" y="384" fill="#009949"/><rect x="1356" y="384" fill="#039948"/><rect x="1368" y="384" fill="#0d9946"/><rect x="1380" y="384" fill="#179944"/><rect x="1572" y="384" fill="#99560d"/><rect x="1584" y="384" fill="#994f0a"/><rect x="1596" y="384" fill="#994907"/><rect x="1608" y="384" fill="#994404"/><rect x="1620" y="384" fill="#993f02"/><rect x="1632" y="384" fill="#993a00"/><rect x="1644" y="384" fill="#993600"/><rect x="1656" y="384" fill="#993200"/><rect x="1668" y="384" fill="#992e00"/><rect x="1164" y="396" fill="#009965"/><rect x="1176" y="396" fill="#009964"/><rect x="1188" y="396" fill="#009963"/><rect x="1200" y="396" fill="#009962"/><rect x="1212" y="396" fill="#009961"/><rect x="1224" y="396" fill="#009960"/><rect x="1236" y="396" fill="#00995f"/><rect x="1248" y="396" fill="#00995e"/><rect x="1260" y="396" fill="#00995d"/><rect x="1272" y="396" fill="#00995b"/><rect x="1284" y="396" fill="#00995a"/><rect x="1296" y="396" fill="#009959"/><rect x="1308" y="396" fill="#009957"/><rect x="1320" y="396" fill="#009956"/><rect x="1332" y="396" fill="#009954"/><rect x="1344" y="396" fill="#009953"/><rect x="1356" y="396" fill="#069951"/><rect x="1368" y="396" fill="#10994f"/><rect x="1596" y="396" fill="#99420b"/><rect x="1608" y="396" fill="#993d08"/><rect x="1620" y="396" fill="#993806"/><rect x="1632" y="396" fill="#993403"/><rect x="1644" y="396" fill="#993001"/><rect x="1656" y="396" fill="#992c00"/><rect x="1668" y="396" fill="#992900"/><rect x="1680" y="396" fill="#992600"/><rect x="1164" y="408" fill="#00996e"/><rect x="1176" y="408" fill="#00996d"/><rect x="1188" y="408" fill="#00996c"/><rect x="1200" y="408" fill="#00996c"/><rect x="1212" y="408" fill="#00996b"/><rect x="1224" y="408" fill="#00996a"/><rect x="1236" y="408" fill="#009969"/><rect x="1248" y="408" fill="#009967"/><rect x="1260" y="408" fill="#009966"/><rect x="1272" y="408" fill="#009965"/><rect x="1284" y="408" fill="#009964"/><rect x="1296" y="408" fill="#009963"/><rect x="1308" y="408" fill="#009961"/><rect x="1320" y="408" fill="#009960"/><rect x="1332" y="408" fill="#00995f"/><rect x="1344" y="408" fill="#00995d"/><rect x="1356" y="408" fill="#09995c"/><rect x="1368" y="408" fill="#14995a"/><rect x="1608" y="408" fill="#99360b"/><rect x="1620" y="408" fill="#993209"/><rect x="1632" y="408" fill="#992e06"/><rect x="1644" y="408" fill="#992a04"/><rect x="1656" y="408" fill="#992702"/><rect x="1668" y="408" fill="#992400"/><rect x="1680" y="408" fill="#992100"/><rect x="1692" y="408" fill="#991e00"/><rect x="1704" y="408" fill="#991b00"/><rect x="1176" y="420" fill="#009977"/><rect x="1188" y="420" fill="#009976"/><rect x="1200" y="420" fill="#009976"/><rect x="1212" y="420" fill="#009975"/><rect x="1224" y="420" fill="#009974"/><rect x="1236" y="420" fill="#009973"/><rect x="1248" y="420" fill="#009972"/><rect x="1260" y="420" fill="#009971"/><rect x="1272" y="420" fill="#009970"/><rect x="1284" y="420" fill="#00996f"/><rect x="1296" y="420" fill="#00996e"/><rect x="1308" y="420" fill="#00996d"/><rect x="1320" y="420" fill="#00996c"/><rect x="1332" y="420" fill="#00996a"/><rect x="1344" y="420" fill="#019969"/><rect x="1356" y="420" fill="#0d9968"/><rect x="1368" y="420" fill="#199966"/><rect x="1632" y="420" fill="#99280a"/><rect x="1644" y="420" fill="#992407"/><rect x="1656" y="420" fill="#992105"/><rect x="1668" y="420" fill="#991e03"/><rect x="1680" y="420" fill="#991c01"/><rect x="1692" y="420" fill="#991900"/><rect x="1704" y="420" fill="#991700"/><rect x="1716" y="420" fill="#991500"/><rect x="1176" y="432" fill="#009982"/><rect x="1188" y="432" fill="#009981"/><rect x="1200" y="432" fill="#009981"/><rect x="1212" y="432" fill="#009980"/><rect x="1224" y="432" fill="#00997f"/><rect x="1236" y="432" fill="#00997f"/><rect x="1248" y="432" fill="#00997e"/><rect x="1260" y="432" fill="#00997d"/><rect x="1272" y="432" fill="#00997c"/><rect x="1284" y="432" fill="#00997b"/><rect x="1296" y="432" fill="#00997b"/><rect x="1308" y="432" fill="#00997a"/><rect x="1320" y="432" fill="#009979"/><rect x="1332" y="432" fill="#009978"/><rect x="1344" y="432" fill="#049976"/><rect x="1356" y="432" fill="#119975"/><rect x="1368" y="432" fill="#1e9974"/><rect x="1656" y="432" fill="#991c08"/><rect x="1668" y="432" fill="#991906"/><rect x="1680" y="432" fill="#991704"/><rect x="1692" y="432" fill="#991402"/><rect x="1704" y="432" fill="#991201"/><rect x="1716" y="432" fill="#991000"/><rect x="1728" y="432" fill="#990e00"/><rect x="1740" y="432" fill="#990d00"/><rect x="1176" y="444" fill="#00998e"/><rect x="1188" y="444" fill="#00998e"/><rect x="1200" y="444" fill="#00998d"/><rect x="1212" y="444" fill="#00998d"/><rect x="1224" y="444" fill="#00998c"/><rect x="1236" y="444" fill="#00998c"/><rect x="1248" y="444" fill="#00998b"/><rect x="1260" y="444" fill="#00998b"/><rect x="1272" y="444" fill="#00998a"/><rect x="1284" y="444" fill="#009989"/><rect x="1296" y="444" fill="#009989"/><rect x="1308" y="444" fill="#009988"/><rect x="1320" y="444" fill="#009987"/><rect x="1332" y="444" fill="#009987"/><rect x="1344" y="444" fill="#089986"/><rect x="1356" y="444" fill="#169985"/><rect x="1668" y="444" fill="#991409"/><rect x="1680" y="444" fill="#991207"/><rect x="1692" y="444" fill="#991005"/><rect x="1704" y="444" fill="#990e03"/><rect x="1716" y="444" fill="#990c01"/><rect x="1728" y="444" fill="#990a00"/><rect x="1740" y="444" fill="#990900"/><rect x="1752" y="444" fill="#990700"/><rect x="1176" y="456" fill="#009699"/><rect x="1188" y="456" fill="#009799"/><rect x="1200" y="456" fill="#009799"/><rect x="1212" y="456" fill="#009799"/><rect x="1224" y="456" fill="#009799"/><rect x="1236" y="456" fill="#009799"/><rect x="1248" y="456" fill="#009899"/><rect x="1260" y="456" fill="#009899"/><rect x="1272" y="456" fill="#009899"/><rect x="1284" y="456" fill="#009999"/><rect x="1296" y="456" fill="#009999"/><rect x="1308" y="456" fill="#009999"/><rect x="1320" y="456" fill="#009999"/><rect x="1332" y="456" fill="#009998"/><rect x="1344" y="456" fill="#0c9998"/><rect x="1356" y="456" fill="#1b9998"/><rect x="1692" y="456" fill="#990b07"/><rect x="1704" y="456" fill="#990906"/><rect x="1716" y="456" fill="#990804"/><rect x="1728" y="456" fill="#990602"/><rect x="1740" y="456" fill="#990501"/><rect x="1752" y="456" fill="#990300"/><rect x="1764" y="456" fill="#990200"/><rect x="1776" y="456" fill="#990100"/><rect x="1188" y="468" fill="#008999"/><rect x="1200" y="468" fill="#008999"/><rect x="1212" y="468" fill="#008999"/><rect x="1224" y="468" fill="#008999"/><rect x="1236" y="468" fill="#008999"/><rect x="1248" y="468" fill="#008999"/><rect x="1260" y="468" fill="#008899"/><rect x="1272" y="468" fill="#008899"/><rect x="1284" y="468" fill="#008899"/><rect x="1296" y="468" fill="#008899"/><rect x="1308" y="468" fill="#008899"/><rect x="1320" y="468" fill="#008899"/><rect x="1332" y="468" fill="#028899"/><rect x="1344" y="468" fill="#0f8799"/><rect x="1356" y="468" fill="#1e8799"/><rect x="1656" y="468" fill="#990d10"/><rect x="1668" y="468" fill="#990b0e"/><rect x="1680" y="468" fill="#99090c"/><rect x="1692" y="468" fill="#99070a"/><rect x="1704" y="468" fill="#990508"/><rect x="1716" y="468" fill="#990406"/><rect x="1728" y="468" fill="#990205"/><rect x="1740" y="468" fill="#990103"/><rect x="1752" y="468" fill="#990002"/><rect x="1764" y="468" fill="#990000"/><rect x="1776" y="468" fill="#990000"/><rect x="1788" y="468" fill="#990000"/><rect x="1188" y="480" fill="#007c99"/><rect x="1200" y="480" fill="#007c99"/><rect x="1212" y="480" fill="#007c99"/><rect x="1224" y="480" fill="#007b99"/><rect x="1236" y="480" fill="#007b99"/><rect x="1248" y="480" fill="#007a99"/><rect x="1260" y="480" fill="#007a99"/><rect x="1272" y="480" fill="#007a99"/><rect x="1284" y="480" fill="#007999"/><rect x="1296" y="480" fill="#007999"/><rect x="1308" y="480" fill="#007899"/><rect x="1320" y="480" fill="#007799"/><rect x="1332" y="480" fill="#057799"/><rect x="1344" y="480" fill="#127699"/><rect x="1356" y="480" fill="#207699"/><rect x="1620" y="480" fill="#990e1b"/><rect x="1632" y="480" fill="#990c18"/><rect x="1644" y="480" fill="#990a16"/><rect x="1656" y="480" fill="#990813"/><rect x="1668" y="480" fill="#990611"/><rect x="1680" y="480" fill="#99040f"/><rect x="1692" y="480" fill="#99020c"/><rect x="1704" y="480" fill="#99010a"/><rect x="1716" y="480" fill="#990009"/><rect x="1728" y="480" fill="#990007"/><rect x="1740" y="480" fill="#990005"/><rect x="1752" y="480" fill="#990004"/><rect x="1764" y="480" fill="#990002"/><rect x="1776" y="480" fill="#990001"/><rect x="1788" y="480" fill="#990000"/><rect x="1800" y="480" fill="#990000"/><rect x="1188" y="492" fill="#007099"/><rect x="1200" y="492" fill="#007099"/><rect x="1212" y="492" fill="#006f99"/><rect x="1224" y="492" fill="#006f99"/><rect x="1236" y="492" fill="#006e99"/><rect x="1248" y="492" fill="#006d99"/><rect x="1260" y="492" fill="#006d99"/><rect x="1272" y="492" fill="#006c99"/><rect x="1284" y="492" fill="#006b99"/><rect x="1296" y="492" fill="#006a99"/><rect x="1308" y="492" fill="#006999"/><rect x="1320" y="492" fill="#006999"/><rect x="1332" y="492" fill="#086899"/><rect x="1344" y="492" fill="#156799"/><rect x="1584" y="492" fill="#991029"/><rect x="1596" y="492" fill="#990d25"/><rect x="1608" y="492" fill="#990b22"/><rect x="1620" y="492" fill="#99091e"/><rect x="1632" y="492" fill="#99071b"/><rect x="1644" y="492" fill="#990518"/><rect x="1656" y="492" fill="#990316"/><rect x="1668" y="492" fill="#990113"/><rect x="1680" y="492" fill="#990011"/><rect x="1692" y="492" fill="#99000f"/><rect x="1704" y="492" fill="#99000d"/><rect x="1716" y="492" fill="#99000b"/><rect x="1728" y="492" fill="#990009"/><rect x="1740" y="492" fill="#990008"/><rect x="1752" y="492" fill="#990006"/><rect x="1764" y="492" fill="#990004"/><rect x="1776" y="492" fill="#990003"/><rect x="1788" y="492" fill="#990002"/><rect x="1800" y="492" fill="#990000"/><rect x="1200" y="504" fill="#006599"/><rect x="1212" y="504" fill="#006499"/><rect x="1224" y="504" fill="#006399"/><rect x="1236" y="504" fill="#006299"/><rect x="1248" y="504" fill="#006199"/><rect x="1260" y="504" fill="#006099"/><rect x="1272" y="504" fill="#005f99"/><rect x="1284" y="504" fill="#005e99"/><rect x="1296" y="504" fill="#005d99"/><rect x="1308" y="504" fill="#005c99"/><rect x="1320" y="504" fill="#005b99"/><rect x="1332" y="504" fill="#0b5999"/><rect x="1344" y="504" fill="#175899"/><rect x="1560" y="504" fill="#991036"/><rect x="1572" y="504" fill="#990d31"/><rect x="1584" y="504" fill="#990a2c"/><rect x="1596" y="504" fill="#990828"/><rect x="1608" y="504" fill="#990525"/><rect x="1620" y="504" fill="#990321"/><rect x="1632" y="504" fill="#99011e"/><rect x="1644" y="504" fill="#99001b"/><rect x="1656" y="504" fill="#990018"/><rect x="1668" y="504" fill="#990016"/><rect x="1680" y="504" fill="#990013"/><rect x="1692" y="504" fill="#990011"/><rect x="1704" y="504" fill="#99000f"/><rect x="1716" y="504" fill="#99000d"/><rect x="1728" y="504" fill="#99000b"/><rect x="1740" y="504" fill="#99000a"/><rect x="1752" y="504" fill="#990008"/><rect x="1764" y="504" fill="#990007"/><rect x="1776" y="504" fill="#990005"/><rect x="1788" y="504" fill="#990004"/><rect x="1800" y="504" fill="#990002"/><rect x="1200" y="516" fill="#005a99"/><rect x="1212" y="516" fill="#005999"/><rect x="1224" y="516" fill="#005899"/><rect x="1236" y="516" fill="#005799"/><rect x="1248" y="516" fill="#005699"/><rect x="1260" y="516" fill="#005499"/><rect x="1272" y="516" fill="#005399"/><rect x="1284" y="516" fill="#005299"/><rect x="1296" y="516" fill="#005199"/><rect x="1308" y="516" fill="#004f99"/><rect x="1320" y="516" fill="#024e99"/><rect x="1332" y="516" fill="#0d4c99"/><rect x="1344" y="516" fill="#194b99"/><rect x="1524" y="516" fill="#99124b"/><rect x="1536" y="516" fill="#990f44"/><rect x="1548" y="516" fill="#990c3e"/><rect x="1560" y="516" fill="#990939"/><rect x="1572" y="516" fill="#990634"/><rect x="1584" y="516" fill="#99042f"/><rect x="1596" y="516" fill="#99022b"/><rect x="1608" y="516" fill="#990027"/><rect x="1620" y="516" fill="#990024"/><rect x="1632" y="516" fill="#990021"/><rect x="1644" y="516" fill="#99001e"/><rect x="1656" y="516" fill="#99001b"/><rect x="1668" y="516" fill="#990018"/><rect x="1680" y="516" fill="#990016"/><rect x="1692" y="516" fill="#990014"/><rect x="1704" y="516" fill="#990011"/><rect x="1716" y="516" fill="#99000f"/><rect x="1728" y="516" fill="#99000e"/><rect x="1740" y="516" fill="#99000c"/><rect x="1752" y="516" fill="#99000a"/><rect x="1764" y="516" fill="#990009"/><rect x="1776" y="516" fill="#990007"/><rect x="1788" y="516" fill="#990006"/><rect x="1800" y="516" fill="#990004"/><rect x="1200" y="528" fill="#005099"/><rect x="1212" y="528" fill="#004f99"/><rect x="1224" y="528" fill="#004d99"/><rect x="1236" y="528" fill="#004c99"/><rect x="1248" y="528" fill="#004b99"/><rect x="1260" y="528" fill="#004a99"/><rect x="1272" y="528" fill="#004899"/><rect x="1284" y="528" fill="#004799"/><rect x="1296" y="528" fill="#004599"/><rect x="1308" y="528" fill="#004499"/><rect x="1320" y="528" fill="#054299"/><rect x="1332" y="528" fill="#104099"/><rect x="1344" y="528" fill="#1b3e99"/><rect x="1488" y="528" fill="#991669"/><rect x="1500" y="528" fill="#99125f"/><rect x="1512" y="528" fill="#990e56"/><rect x="1524" y="528" fill="#990a4f"/><rect x="1536" y="528" fill="#990748"/><rect x="1548" y="528" fill="#990542"/><rect x="1560" y="528" fill="#99023c"/><rect x="1572" y="528" fill="#990037"/><rect x="1584" y="528" fill="#990032"/><rect x="1596" y="528" fill="#99002e"/><rect x="1608" y="528" fill="#99002a"/><rect x="1620" y="528" fill="#990027"/><rect x="1632" y="528" fill="#990023"/><rect x="1644" y="528" fill="#990020"/><rect x="1656" y="528" fill="#99001d"/><rect x="1668" y="528" fill="#99001b"/><rect x="1680" y="528" fill="#990018"/><rect x="1692" y="528" fill="#990016"/><rect x="1704" y="528" fill="#990014"/><rect x="1716" y="528" fill="#990012"/><rect x="1728" y="528" fill="#990010"/><rect x="1740" y="528" fill="#99000e"/><rect x="1752" y="528" fill="#99000c"/><rect x="1212" y="540" fill="#004599"/><rect x="1224" y="540" fill="#004499"/><rect x="1236" y="540" fill="#004299"/><rect x="1248" y="540" fill="#004199"/><rect x="1260" y="540" fill="#003f99"/><rect x="1272" y="540" fill="#003e99"/><rect x="1284" y="540" fill="#003c99"/><rect x="1296" y="540" fill="#003a99"/><rect x="1308" y="540" fill="#003999"/><rect x="1320" y="540" fill="#073799"/><rect x="1332" y="540" fill="#123599"/><rect x="1452" y="540" fill="#991b95"/><rect x="1464" y="540" fill="#991685"/><rect x="1476" y="540" fill="#991178"/><rect x="1488" y="540" fill="#990d6d"/><rect x="1500" y="540" fill="#990963"/><rect x="1512" y="540" fill="#99065a"/><rect x="1524" y="540" fill="#990352"/><rect x="1536" y="540" fill="#99004b"/><rect x="1548" y="540" fill="#990045"/><rect x="1560" y="540" fill="#99003f"/><rect x="1572" y="540" fill="#99003a"/><rect x="1584" y="540" fill="#990035"/><rect x="1596" y="540" fill="#990031"/><rect x="1608" y="540" fill="#99002d"/><rect x="1620" y="540" fill="#990029"/><rect x="1632" y="540" fill="#990026"/><rect x="1644" y="540" fill="#990023"/><rect x="1656" y="540" fill="#990020"/><rect x="1668" y="540" fill="#99001d"/><rect x="1680" y="540" fill="#99001b"/><rect x="1692" y="540" fill="#990018"/><rect x="1704" y="540" fill="#990016"/><rect x="1716" y="540" fill="#990014"/><rect x="1212" y="552" fill="#003c99"/><rect x="1224" y="552" fill="#003a99"/><rect x="1236" y="552" fill="#003999"/><rect x="1248" y="552" fill="#003799"/><rect x="1260" y="552" fill="#003699"/><rect x="1272" y="552" fill="#003499"/><rect x="1284" y="552" fill="#003299"/><rect x="1296" y="552" fill="#003099"/><rect x="1308" y="552" fill="#002f99"/><rect x="1320" y="552" fill="#092d99"/><rect x="1332" y="552" fill="#142b99"/><rect x="1416" y="552" fill="#6b1999"/><rect x="1428" y="552" fill="#7a1699"/><rect x="1440" y="552" fill="#891399"/><rect x="1452" y="552" fill="#991098"/><rect x="1464" y="552" fill="#990b89"/><rect x="1476" y="552" fill="#99077b"/><rect x="1488" y="552" fill="#990470"/><rect x="1500" y="552" fill="#990166"/><rect x="1512" y="552" fill="#99005d"/><rect x="1524" y="552" fill="#990055"/><rect x="1536" y="552" fill="#99004e"/><rect x="1548" y="552" fill="#990048"/><rect x="1560" y="552" fill="#990042"/><rect x="1572" y="552" fill="#99003d"/><rect x="1584" y="552" fill="#990038"/><rect x="1596" y="552" fill="#990034"/><rect x="1608" y="552" fill="#990030"/><rect x="1620" y="552" fill="#99002c"/><rect x="1632" y="552" fill="#990028"/><rect x="1644" y="552" fill="#990025"/><rect x="1656" y="552" fill="#990022"/><rect x="1668" y="552" fill="#99001f"/><rect x="1680" y="552" fill="#99001d"/><rect x="1212" y="564" fill="#003399"/><rect x="1224" y="564" fill="#003299"/><rect x="1236" y="564" fill="#003099"/><rect x="1248" y="564" fill="#002e99"/><rect x="1260" y="564" fill="#002d99"/><rect x="1272" y="564" fill="#002b99"/><rect x="1284" y="564" fill="#002999"/><rect x="1296" y="564" fill="#002799"/><rect x="1308" y="564" fill="#022599"/><rect x="1320" y="564" fill="#0c2399"/><rect x="1332" y="564" fill="#162199"/><rect x="1380" y="564" fill="#421799"/><rect x="1392" y="564" fill="#4f1499"/><rect x="1404" y="564" fill="#5c1199"/><rect x="1416" y="564" fill="#6a0f99"/><rect x="1428" y="564" fill="#780b99"/><rect x="1440" y="564" fill="#870899"/><rect x="1452" y="564" fill="#970599"/><rect x="1464" y="564" fill="#99018c"/><rect x="1476" y="564" fill="#99007f"/><rect x="1488" y="564" fill="#990073"/><rect x="1500" y="564" fill="#990069"/><rect x="1512" y="564" fill="#990060"/><rect x="1524" y="564" fill="#990058"/><rect x="1536" y="564" fill="#990051"/><rect x="1548" y="564" fill="#99004b"/><rect x="1560" y="564" fill="#990045"/><rect x="1572" y="564" fill="#99003f"/><rect x="1584" y="564" fill="#99003b"/><rect x="1596" y="564" fill="#990036"/><rect x="1608" y="564" fill="#990032"/><rect x="1620" y="564" fill="#99002e"/><rect x="1632" y="564" fill="#99002b"/><rect x="1644" y="564" fill="#990028"/><rect x="1224" y="576" fill="#002999"/><rect x="1236" y="576" fill="#002899"/><rect x="1248" y="576" fill="#002699"/><rect x="1260" y="576" fill="#002499"/><rect x="1272" y="576" fill="#002299"/><rect x="1284" y="576" fill="#002099"/><rect x="1296" y="576" fill="#001e99"/><rect x="1308" y="576" fill="#041c99"/><rect x="1320" y="576" fill="#0e1a99"/><rect x="1332" y="576" fill="#171899"/><rect x="1344" y="576" fill="#221599"/><rect x="1356" y="576" fill="#2c1399"/><rect x="1368" y="576" fill="#371099"/><rect x="1380" y="576" fill="#430d99"/><rect x="1392" y="576" fill="#4f0b99"/><rect x="1404" y="576" fill="#5b0899"/><rect x="1416" y="576" fill="#690599"/><rect x="1428" y="576" fill="#760199"/><rect x="1440" y="576" fill="#850099"/><rect x="1452" y="576" fill="#940099"/><rect x="1464" y="576" fill="#99008f"/><rect x="1476" y="576" fill="#990082"/><rect x="1488" y="576" fill="#990076"/><rect x="1500" y="576" fill="#99006c"/><rect x="1512" y="576" fill="#990063"/><rect x="1524" y="576" fill="#99005b"/><rect x="1536" y="576" fill="#990054"/><rect x="1548" y="576" fill="#99004d"/><rect x="1560" y="576" fill="#990048"/><rect x="1572" y="576" fill="#990042"/><rect x="1584" y="576" fill="#99003d"/><rect x="1596" y="576" fill="#990039"/><rect x="1608" y="576" fill="#990035"/><rect x="1224" y="588" fill="#002299"/><rect x="1236" y="588" fill="#002099"/><rect x="1248" y="588" fill="#001e99"/><rect x="1260" y="588" fill="#001c99"/><rect x="1272" y="588" fill="#001a99"/><rect x="1284" y="588" fill="#001899"/><rect x="1296" y="588" fill="#001699"/><rect x="1308" y="588" fill="#061499"/><rect x="1320" y="588" fill="#101199"/><rect x="1332" y="588" fill="#190f99"/><rect x="1344" y="588" fill="#230c99"/><rect x="1356" y="588" fill="#2d0a99"/><rect x="1368" y="588" fill="#380799"/><rect x="1380" y="588" fill="#430499"/><rect x="1392" y="588" fill="#4f0199"/><rect x="1404" y="588" fill="#5b0099"/><rect x="1416" y="588" fill="#680099"/><rect x="1428" y="588" fill="#750099"/><rect x="1440" y="588" fill="#830099"/><rect x="1452" y="588" fill="#910099"/><rect x="1464" y="588" fill="#990092"/><rect x="1476" y="588" fill="#990085"/><rect x="1488" y="588" fill="#990079"/><rect x="1500" y="588" fill="#99006f"/><rect x="1512" y="588" fill="#990066"/><rect x="1524" y="588" fill="#99005e"/><rect x="1536" y="588" fill="#990057"/><rect x="1548" y="588" fill="#990050"/><rect x="1560" y="588" fill="#99004a"/><rect x="1572" y="588" fill="#990045"/><rect x="1236" y="600" fill="#001899"/><rect x="1248" y="600" fill="#001699"/><rect x="1260" y="600" fill="#001499"/><rect x="1272" y="600" fill="#001299"/><rect x="1284" y="600" fill="#001099"/><rect x="1296" y="600" fill="#000e99"/><rect x="1308" y="600" fill="#090c99"/><rect x="1320" y="600" fill="#110999"/><rect x="1332" y="600" fill="#1b0799"/><rect x="1344" y="600" fill="#240499"/><rect x="1356" y="600" fill="#2e0299"/><rect x="1368" y="600" fill="#390099"/><rect x="1380" y="600" fill="#440099"/><rect x="1392" y="600" fill="#4f0099"/><rect x="1404" y="600" fill="#5b0099"/><rect x="1416" y="600" fill="#670099"/><rect x="1428" y="600" fill="#730099"/><rect x="1440" y="600" fill="#810099"/><rect x="1452" y="600" fill="#8f0099"/><rect x="1464" y="600" fill="#990095"/><rect x="1476" y="600" fill="#990088"/><rect x="1488" y="600" fill="#99007c"/><rect x="1500" y="600" fill="#990072"/><rect x="1512" y="600" fill="#990069"/><rect x="1524" y="600" fill="#990061"/><rect x="1536" y="600" fill="#99005a"/><rect x="1248" y="612" fill="#000f99"/><rect x="1260" y="612" fill="#000d99"/><rect x="1272" y="612" fill="#000b99"/><rect x="1284" y="612" fill="#000999"/><rect x="1296" y="612" fill="#020699"/><rect x="1308" y="612" fill="#0a0499"/><rect x="1320" y="612" fill="#130299"/><rect x="1332" y="612" fill="#1c0099"/><rect x="1344" y="612" fill="#260099"/><rect x="1356" y="612" fill="#2f0099"/><rect x="1368" y="612" fill="#390099"/><rect x="1380" y="612" fill="#440099"/><rect x="1392" y="612" fill="#4f0099"/><rect x="1404" y="612" fill="#5a0099"/><rect x="1416" y="612" fill="#660099"/><rect x="1428" y="612" fill="#720099"/><rect x="1440" y="612" fill="#7f0099"/><rect x="1452" y="612" fill="#8c0099"/><rect x="1464" y="612" fill="#990098"/><rect x="1476" y="612" fill="#99008a"/><rect x="1488" y="612" fill="#99007f"/><rect x="1500" y="612" fill="#990075"/><rect x="1248" y="624" fill="#000899"/><rect x="1260" y="624" fill="#000699"/><rect x="1272" y="624" fill="#000499"/><rect x="1284" y="624" fill="#000299"/><rect x="1296" y="624" fill="#040099"/><rect x="1308" y="624" fill="#0c0099"/><rect x="1320" y="624" fill="#150099"/><rect x="1332" y="624" fill="#1e0099"/><rect x="1344" y="624" fill="#270099"/><rect x="1356" y="624" fill="#300099"/><rect x="1368" y="624" fill="#3a0099"/><rect x="1380" y="624" fill="#440099"/><rect x="1392" y="624" fill="#4f0099"/><rect x="1404" y="624" fill="#5a0099"/><rect x="1416" y="624" fill="#650099"/><rect x="1428" y="624" fill="#710099"/><rect x="1440" y="624" fill="#7d0099"/><rect x="1452" y="624" fill="#8a0099"/><rect x="1464" y="624" fill="#980099"/><rect x="1260" y="636" fill="#000099"/><rect x="1272" y="636" fill="#000099"/><rect x="1284" y="636" fill="#000099"/><rect x="1296" y="636" fill="#060099"/><rect x="1308" y="636" fill="#0e0099"/><rect x="1320" y="636" fill="#160099"/><rect x="1332" y="636" fill="#1f0099"/><rect x="1344" y="636" fill="#280099"/><rect x="1356" y="636" fill="#310099"/><rect x="1368" y="636" fill="#3b0099"/><rect x="1380" y="636" fill="#440099"/><rect x="1392" y="636" fill="#4f0099"/><rect x="1404" y="636" fill="#590099"/><rect x="1416" y="636" fill="#640099"/><rect x="1428" y="636" fill="#700099"/><rect x="1272" y="648" fill="#000099"/><rect x="1284" y="648" fill="#000099"/><rect x="1296" y="648" fill="#080099"/><rect x="1308" y="648" fill="#100099"/><rect x="1320" y="648" fill="#180099"/><rect x="1332" y="648" fill="#200099"/><rect x="1344" y="648" fill="#290099"/><rect x="1356" y="648" fill="#320099"/><rect x="1368" y="648" fill="#3b0099"/><rect x="1380" y="648" fill="#450099"/><rect x="1392" y="648" fill="#4f0099"/><rect x="1284" y="660" fill="#020099"/><rect x="1296" y="660" fill="#0a0099"/><rect x="1308" y="660" fill="#110099"/><rect x="1320" y="660" fill="#190099"/><rect x="1332" y="660" fill="#210099"/><rect x="1344" y="660" fill="#2a0099"/><rect x="1356" y="660" fill="#330099"/></g></g><g clip-path="url(#clTri)"><g class="i" filter="url(#bl8)"><rect x="1390" y="230" fill="#00ff00"/><rect x="1400" y="230" fill="#01ff00"/><rect x="1410" y="230" fill="#03ff00"/><rect x="1380" y="240" fill="#00ff01"/><rect x="1390" y="240" fill="#00ff00"/><rect x="1400" y="240" fill="#01ff00"/><rect x="1410" y="240" fill="#04ff00"/><rect x="1420" y="240" fill="#08ff00"/><rect x="1380" y="250" fill="#00ff02"/><rect x="1390" y="250" fill="#00ff01"/><rect x="1400" y="250" fill="#02ff01"/><rect x="1410" y="250" fill="#05ff00"/><rect x="1420" y="250" fill="#09ff00"/><rect x="1430" y="250" fill="#0eff00"/><rect x="1440" y="250" fill="#14ff00"/><rect x="1380" y="260" fill="#00ff04"/><rect x="1390" y="260" fill="#00ff03"/><rect x="1400" y="260" fill="#03ff02"/><rect x="1410" y="260" fill="#06ff01"/><rect x="1420" y="260" fill="#0bff00"/><rect x="1430" y="260" fill="#11ff00"/><rect x="1440" y="260" fill="#17ff00"/><rect x="1450" y="260" fill="#1eff00"/><rect x="1380" y="270" fill="#00ff06"/><rect x="1390" y="270" fill="#01ff04"/><rect x="1400" y="270" fill="#04ff03"/><rect x="1410" y="270" fill="#08ff02"/><rect x="1420" y="270" fill="#0dff02"/><rect x="1430" y="270" fill="#13ff01"/><rect x="1440" y="270" fill="#1aff00"/><rect x="1450" y="270" fill="#21ff00"/><rect x="1460" y="270" fill="#2aff00"/><rect x="1470" y="270" fill="#33ff00"/><rect x="1370" y="280" fill="#00ff09"/><rect x="1380" y="280" fill="#00ff08"/><rect x="1390" y="280" fill="#02ff07"/><rect x="1400" y="280" fill="#05ff05"/><rect x="1410" y="280" fill="#0aff04"/><rect x="1420" y="280" fill="#0fff03"/><rect x="1430" y="280" fill="#16ff02"/><rect x="1440" y="280" fill="#1dff01"/><rect x="1450" y="280" fill="#25ff01"/><rect x="1460" y="280" fill="#2eff00"/><rect x="1470" y="280" fill="#38ff00"/><rect x="1480" y="280" fill="#43ff00"/><rect x="1490" y="280" fill="#4fff00"/><rect x="1370" y="290" fill="#00ff0c"/><rect x="1380" y="290" fill="#00ff0b"/><rect x="1390" y="290" fill="#02ff09"/><rect x="1400" y="290" fill="#06ff08"/><rect x="1410" y="290" fill="#0bff07"/><rect x="1420" y="290" fill="#11ff05"/><rect x="1430" y="290" fill="#18ff04"/><rect x="1440" y="290" fill="#20ff03"/><rect x="1450" y="290" fill="#29ff02"/><rect x="1460" y="290" fill="#33ff01"/><rect x="1470" y="290" fill="#3eff00"/><rect x="1480" y="290" fill="#4aff00"/><rect x="1490" y="290" fill="#57ff00"/><rect x="1500" y="290" fill="#65ff00"/><rect x="1370" y="300" fill="#00ff10"/><rect x="1380" y="300" fill="#01ff0e"/><rect x="1390" y="300" fill="#04ff0d"/><rect x="1400" y="300" fill="#08ff0b"/><rect x="1410" y="300" fill="#0dff0a"/><rect x="1420" y="300" fill="#14ff08"/><rect x="1430" y="300" fill="#1cff07"/><rect x="1440" y="300" fill="#24ff05"/><rect x="1450" y="300" fill="#2eff04"/><rect x="1460" y="300" fill="#39ff03"/><rect x="1470" y="300" fill="#44ff02"/><rect x="1480" y="300" fill="#51ff01"/><rect x="1490" y="300" fill="#5fff00"/><rect x="1500" y="300" fill="#6eff00"/><rect x="1510" y="300" fill="#7eff00"/><rect x="1520" y="300" fill="#8fff00"/><rect x="1370" y="310" fill="#00ff14"/><rect x="1380" y="310" fill="#01ff12"/><rect x="1390" y="310" fill="#05ff10"/><rect x="1400" y="310" fill="#0aff0f"/><rect x="1410" y="310" fill="#10ff0d"/><rect x="1420" y="310" fill="#17ff0b"/><rect x="1430" y="310" fill="#1fff0a"/><rect x="1440" y="310" fill="#29ff08"/><rect x="1450" y="310" fill="#33ff07"/><rect x="1460" y="310" fill="#3fff05"/><rect x="1470" y="310" fill="#4cff04"/><rect x="1480" y="310" fill="#59ff03"/><rect x="1490" y="310" fill="#68ff02"/><rect x="1500" y="310" fill="#78ff01"/><rect x="1510" y="310" fill="#8aff00"/><rect x="1520" y="310" fill="#9dff00"/><rect x="1530" y="310" fill="#b1ff00"/><rect x="1360" y="320" fill="#00ff1b"/><rect x="1370" y="320" fill="#00ff19"/><rect x="1380" y="320" fill="#02ff17"/><rect x="1390" y="320" fill="#06ff15"/><rect x="1400" y="320" fill="#0cff13"/><rect x="1410" y="320" fill="#13ff11"/><rect x="1420" y="320" fill="#1bff0f"/><rect x="1430" y="320" fill="#24ff0e"/><rect x="1440" y="320" fill="#2eff0c"/><rect x="1450" y="320" fill="#39ff0a"/><rect x="1460" y="320" fill="#46ff08"/><rect x="1470" y="320" fill="#54ff07"/><rect x="1480" y="320" fill="#62ff05"/><rect x="1490" y="320" fill="#73ff04"/><rect x="1500" y="320" fill="#84ff02"/><rect x="1510" y="320" fill="#97ff01"/><rect x="1520" y="320" fill="#acff00"/><rect x="1530" y="320" fill="#c1ff00"/><rect x="1540" y="320" fill="#d9ff00"/><rect x="1550" y="320" fill="#f2ff00"/><rect x="1360" y="330" fill="#00ff20"/><rect x="1370" y="330" fill="#00ff1e"/><rect x="1380" y="330" fill="#03ff1c"/><rect x="1390" y="330" fill="#08ff1a"/><rect x="1400" y="330" fill="#0eff18"/><rect x="1410" y="330" fill="#16ff16"/><rect x="1420" y="330" fill="#1eff14"/><rect x="1430" y="330" fill="#28ff12"/><rect x="1440" y="330" fill="#33ff10"/><rect x="1450" y="330" fill="#40ff0e"/><rect x="1460" y="330" fill="#4eff0c"/><rect x="1470" y="330" fill="#5cff0a"/><rect x="1480" y="330" fill="#6dff08"/><rect x="1490" y="330" fill="#7eff07"/><rect x="1500" y="330" fill="#91ff05"/><rect x="1510" y="330" fill="#a6ff04"/><rect x="1520" y="330" fill="#bcff02"/><rect x="1530" y="330" fill="#d4ff01"/><rect x="1540" y="330" fill="#eeff00"/><rect x="1550" y="330" fill="#fff500"/><rect x="1560" y="330" fill="#ffdd00"/><rect x="1570" y="330" fill="#ffc700"/><rect x="1360" y="340" fill="#00ff26"/><rect x="1370" y="340" fill="#01ff24"/><rect x="1380" y="340" fill="#04ff22"/><rect x="1390" y="340" fill="#0aff20"/><rect x="1400" y="340" fill="#11ff1e"/><rect x="1410" y="340" fill="#19ff1c"/><rect x="1420" y="340" fill="#23ff19"/><rect x="1430" y="340" fill="#2eff17"/><rect x="1440" y="340" fill="#3aff15"/><rect x="1450" y="340" fill="#47ff13"/><rect x="1460" y="340" fill="#56ff11"/><rect x="1470" y="340" fill="#66ff0f"/><rect x="1480" y="340" fill="#78ff0d"/><rect x="1490" y="340" fill="#8cff0b"/><rect x="1500" y="340" fill="#a0ff09"/><rect x="1510" y="340" fill="#b7ff07"/><rect x="1520" y="340" fill="#cfff05"/><rect x="1530" y="340" fill="#eaff03"/><rect x="1540" y="340" fill="#fff902"/><rect x="1550" y="340" fill="#ffdf01"/><rect x="1560" y="340" fill="#ffc800"/><rect x="1570" y="340" fill="#ffb500"/><rect x="1580" y="340" fill="#ffa400"/><rect x="1350" y="350" fill="#00ff30"/><rect x="1360" y="350" fill="#00ff2e"/><rect x="1370" y="350" fill="#02ff2b"/><rect x="1380" y="350" fill="#06ff29"/><rect x="1390" y="350" fill="#0cff27"/><rect x="1400" y="350" fill="#14ff25"/><rect x="1410" y="350" fill="#1dff22"/><rect x="1420" y="350" fill="#28ff20"/><rect x="1430" y="350" fill="#34ff1e"/><rect x="1440" y="350" fill="#41ff1b"/><rect x="1450" y="350" fill="#50ff19"/><rect x="1460" y="350" fill="#60ff16"/><rect x="1470" y="350" fill="#72ff14"/><rect x="1480" y="350" fill="#85ff12"/><rect x="1490" y="350" fill="#9aff0f"/><rect x="1500" y="350" fill="#b1ff0d"/><rect x="1510" y="350" fill="#caff0b"/><rect x="1520" y="350" fill="#e5ff09"/><rect x="1530" y="350" fill="#fffc07"/><rect x="1540" y="350" fill="#ffe104"/><rect x="1550" y="350" fill="#ffca02"/><rect x="1560" y="350" fill="#ffb501"/><rect x="1570" y="350" fill="#ffa400"/><rect x="1580" y="350" fill="#ff9400"/><rect x="1590" y="350" fill="#ff8700"/><rect x="1600" y="350" fill="#ff7a00"/><rect x="1350" y="360" fill="#00ff38"/><rect x="1360" y="360" fill="#00ff36"/><rect x="1370" y="360" fill="#03ff34"/><rect x="1380" y="360" fill="#08ff31"/><rect x="1390" y="360" fill="#0fff2f"/><rect x="1400" y="360" fill="#18ff2c"/><rect x="1410" y="360" fill="#22ff2a"/><rect x="1420" y="360" fill="#2dff27"/><rect x="1430" y="360" fill="#3aff25"/><rect x="1440" y="360" fill="#49ff22"/><rect x="1450" y="360" fill="#59ff20"/><rect x="1460" y="360" fill="#6bff1d"/><rect x="1470" y="360" fill="#7fff1b"/><rect x="1480" y="360" fill="#94ff18"/><rect x="1490" y="360" fill="#abff15"/><rect x="1500" y="360" fill="#c5ff13"/><rect x="1510" y="360" fill="#e0ff10"/><rect x="1520" y="360" fill="#feff0e"/><rect x="1530" y="360" fill="#ffe40a"/><rect x="1540" y="360" fill="#ffcb07"/><rect x="1550" y="360" fill="#ffb605"/><rect x="1560" y="360" fill="#ffa403"/><rect x="1570" y="360" fill="#ff9402"/><rect x="1580" y="360" fill="#ff8501"/><rect x="1590" y="360" fill="#ff7900"/><rect x="1600" y="360" fill="#ff6e00"/><rect x="1610" y="360" fill="#ff6400"/><rect x="1350" y="370" fill="#00ff42"/><rect x="1360" y="370" fill="#00ff40"/><rect x="1370" y="370" fill="#04ff3d"/><rect x="1380" y="370" fill="#0aff3b"/><rect x="1390" y="370" fill="#12ff38"/><rect x="1400" y="370" fill="#1cff36"/><rect x="1410" y="370" fill="#27ff33"/><rect x="1420" y="370" fill="#34ff30"/><rect x="1430" y="370" fill="#42ff2e"/><rect x="1440" y="370" fill="#52ff2b"/><rect x="1450" y="370" fill="#64ff28"/><rect x="1460" y="370" fill="#78ff25"/><rect x="1470" y="370" fill="#8eff23"/><rect x="1480" y="370" fill="#a5ff20"/><rect x="1490" y="370" fill="#bfff1d"/><rect x="1500" y="370" fill="#dbff1a"/><rect x="1510" y="370" fill="#f9ff17"/><rect x="1520" y="370" fill="#ffe612"/><rect x="1530" y="370" fill="#ffcd0e"/><rect x="1540" y="370" fill="#ffb60a"/><rect x="1550" y="370" fill="#ffa308"/><rect x="1560" y="370" fill="#ff9305"/><rect x="1570" y="370" fill="#ff8404"/><rect x="1580" y="370" fill="#ff7802"/><rect x="1590" y="370" fill="#ff6c01"/><rect x="1600" y="370" fill="#ff6200"/><rect x="1610" y="370" fill="#ff5900"/><rect x="1620" y="370" fill="#ff5100"/><rect x="1630" y="370" fill="#ff4a00"/><rect x="1350" y="380" fill="#00ff4d"/><rect x="1360" y="380" fill="#01ff4b"/><rect x="1370" y="380" fill="#06ff48"/><rect x="1380" y="380" fill="#0dff46"/><rect x="1390" y="380" fill="#16ff43"/><rect x="1400" y="380" fill="#20ff40"/><rect x="1410" y="380" fill="#2dff3e"/><rect x="1420" y="380" fill="#3bff3b"/><rect x="1430" y="380" fill="#4bff38"/><rect x="1440" y="380" fill="#5dff35"/><rect x="1450" y="380" fill="#71ff32"/><rect x="1460" y="380" fill="#87ff2f"/><rect x="1470" y="380" fill="#9fff2c"/><rect x="1480" y="380" fill="#b9ff29"/><rect x="1490" y="380" fill="#d5ff26"/><rect x="1500" y="380" fill="#f5ff23"/><rect x="1510" y="380" fill="#ffe91d"/><rect x="1520" y="380" fill="#ffce17"/><rect x="1530" y="380" fill="#ffb712"/><rect x="1540" y="380" fill="#ffa30e"/><rect x="1550" y="380" fill="#ff920b"/><rect x="1560" y="380" fill="#ff8308"/><rect x="1570" y="380" fill="#ff7606"/><rect x="1580" y="380" fill="#ff6a04"/><rect x="1590" y="380" fill="#ff6003"/><rect x="1600" y="380" fill="#ff5701"/><rect x="1610" y="380" fill="#ff4f01"/><rect x="1620" y="380" fill="#ff4800"/><rect x="1630" y="380" fill="#ff4100"/><rect x="1640" y="380" fill="#ff3b00"/><rect x="1650" y="380" fill="#ff3600"/><rect x="1340" y="390" fill="#00ff5c"/><rect x="1350" y="390" fill="#00ff5a"/><rect x="1360" y="390" fill="#02ff57"/><rect x="1370" y="390" fill="#08ff55"/><rect x="1380" y="390" fill="#10ff52"/><rect x="1390" y="390" fill="#1aff50"/><rect x="1400" y="390" fill="#26ff4d"/><rect x="1410" y="390" fill="#34ff4a"/><rect x="1420" y="390" fill="#44ff47"/><rect x="1430" y="390" fill="#55ff44"/><rect x="1440" y="390" fill="#69ff41"/><rect x="1450" y="390" fill="#7fff3e"/><rect x="1460" y="390" fill="#98ff3b"/><rect x="1470" y="390" fill="#b2ff38"/><rect x="1480" y="390" fill="#d0ff34"/><rect x="1490" y="390" fill="#f0ff31"/><rect x="1500" y="390" fill="#ffed2a"/><rect x="1510" y="390" fill="#ffd022"/><rect x="1520" y="390" fill="#ffb81c"/><rect x="1530" y="390" fill="#ffa316"/><rect x="1540" y="390" fill="#ff9112"/><rect x="1550" y="390" fill="#ff820e"/><rect x="1560" y="390" fill="#ff740b"/><rect x="1570" y="390" fill="#ff6808"/><rect x="1580" y="390" fill="#ff5e06"/><rect x="1590" y="390" fill="#ff5504"/><rect x="1600" y="390" fill="#ff4d03"/><rect x="1610" y="390" fill="#ff4502"/><rect x="1620" y="390" fill="#ff3f01"/><rect x="1630" y="390" fill="#ff3900"/><rect x="1640" y="390" fill="#ff3400"/><rect x="1650" y="390" fill="#ff2f00"/><rect x="1660" y="390" fill="#ff2b00"/><rect x="1340" y="400" fill="#00ff6b"/><rect x="1350" y="400" fill="#00ff69"/><rect x="1360" y="400" fill="#04ff66"/><rect x="1370" y="400" fill="#0bff64"/><rect x="1380" y="400" fill="#14ff61"/><rect x="1390" y="400" fill="#1fff5e"/><rect x="1400" y="400" fill="#2cff5b"/><rect x="1410" y="400" fill="#3cff58"/><rect x="1420" y="400" fill="#4eff56"/><rect x="1430" y="400" fill="#61ff52"/><rect x="1440" y="400" fill="#78ff4f"/><rect x="1450" y="400" fill="#90ff4c"/><rect x="1460" y="400" fill="#abff49"/><rect x="1470" y="400" fill="#c9ff45"/><rect x="1480" y="400" fill="#eaff42"/><rect x="1490" y="400" fill="#fff13b"/><rect x="1500" y="400" fill="#ffd230"/><rect x="1510" y="400" fill="#ffb828"/><rect x="1520" y="400" fill="#ffa321"/><rect x="1530" y="400" fill="#ff901b"/><rect x="1540" y="400" fill="#ff8016"/><rect x="1550" y="400" fill="#ff7212"/><rect x="1560" y="400" fill="#ff660e"/><rect x="1570" y="400" fill="#ff5c0b"/><rect x="1580" y="400" fill="#ff5309"/><rect x="1590" y="400" fill="#ff4a07"/><rect x="1600" y="400" fill="#ff4305"/><rect x="1610" y="400" fill="#ff3c03"/><rect x="1620" y="400" fill="#ff3702"/><rect x="1630" y="400" fill="#ff3101"/><rect x="1640" y="400" fill="#ff2d01"/><rect x="1650" y="400" fill="#ff2800"/><rect x="1660" y="400" fill="#ff2500"/><rect x="1670" y="400" fill="#ff2100"/><rect x="1680" y="400" fill="#ff1e00"/><rect x="1340" y="410" fill="#00ff7c"/><rect x="1350" y="410" fill="#01ff7a"/><rect x="1360" y="410" fill="#06ff77"/><rect x="1370" y="410" fill="#0eff75"/><rect x="1380" y="410" fill="#18ff72"/><rect x="1390" y="410" fill="#25ff6f"/><rect x="1400" y="410" fill="#34ff6d"/><rect x="1410" y="410" fill="#45ff6a"/><rect x="1420" y="410" fill="#59ff67"/><rect x="1430" y="410" fill="#6fff64"/><rect x="1440" y="410" fill="#88ff60"/><rect x="1450" y="410" fill="#a4ff5d"/><rect x="1460" y="410" fill="#c3ff5a"/><rect x="1470" y="410" fill="#e4ff56"/><rect x="1480" y="410" fill="#fff550"/><rect x="1490" y="410" fill="#ffd442"/><rect x="1500" y="410" fill="#ffb937"/><rect x="1510" y="410" fill="#ffa22d"/><rect x="1520" y="410" fill="#ff8f26"/><rect x="1530" y="410" fill="#ff7f1f"/><rect x="1540" y="410" fill="#ff701a"/><rect x="1550" y="410" fill="#ff6415"/><rect x="1560" y="410" fill="#ff5912"/><rect x="1570" y="410" fill="#ff500e"/><rect x="1580" y="410" fill="#ff480b"/><rect x="1590" y="410" fill="#ff4009"/><rect x="1600" y="410" fill="#ff3a07"/><rect x="1610" y="410" fill="#ff3405"/><rect x="1620" y="410" fill="#ff2f04"/><rect x="1630" y="410" fill="#ff2a03"/><rect x="1640" y="410" fill="#ff2602"/><rect x="1650" y="410" fill="#ff2201"/><rect x="1660" y="410" fill="#ff1f00"/><rect x="1670" y="410" fill="#ff1c00"/><rect x="1680" y="410" fill="#ff1900"/><rect x="1690" y="410" fill="#ff1600"/><rect x="1340" y="420" fill="#00ff90"/><rect x="1350" y="420" fill="#02ff8e"/><rect x="1360" y="420" fill="#08ff8b"/><rect x="1370" y="420" fill="#11ff89"/><rect x="1380" y="420" fill="#1dff86"/><rect x="1390" y="420" fill="#2cff84"/><rect x="1400" y="420" fill="#3dff81"/><rect x="1410" y="420" fill="#51ff7e"/><rect x="1420" y="420" fill="#67ff7b"/><rect x="1430" y="420" fill="#80ff78"/><rect x="1440" y="420" fill="#9cff75"/><rect x="1450" y="420" fill="#bbff72"/><rect x="1460" y="420" fill="#deff6f"/><rect x="1470" y="420" fill="#fffa69"/><rect x="1480" y="420" fill="#ffd757"/><rect x="1490" y="420" fill="#ffba49"/><rect x="1500" y="420" fill="#ffa23d"/><rect x="1510" y="420" fill="#ff8e33"/><rect x="1520" y="420" fill="#ff7d2b"/><rect x="1530" y="420" fill="#ff6e24"/><rect x="1540" y="420" fill="#ff621e"/><rect x="1550" y="420" fill="#ff5719"/><rect x="1560" y="420" fill="#ff4d15"/><rect x="1570" y="420" fill="#ff4511"/><rect x="1580" y="420" fill="#ff3e0e"/><rect x="1590" y="420" fill="#ff370c"/><rect x="1600" y="420" fill="#ff3109"/><rect x="1610" y="420" fill="#ff2c07"/><rect x="1620" y="420" fill="#ff2806"/><rect x="1630" y="420" fill="#ff2404"/><rect x="1640" y="420" fill="#ff2003"/><rect x="1650" y="420" fill="#ff1c02"/><rect x="1660" y="420" fill="#ff1901"/><rect x="1670" y="420" fill="#ff1701"/><rect x="1680" y="420" fill="#ff1400"/><rect x="1690" y="420" fill="#ff1200"/><rect x="1700" y="420" fill="#ff1000"/><rect x="1710" y="420" fill="#ff0e00"/><rect x="1330" y="430" fill="#00ffa9"/><rect x="1340" y="430" fill="#00ffa7"/><rect x="1350" y="430" fill="#03ffa5"/><rect x="1360" y="430" fill="#0bffa3"/><rect x="1370" y="430" fill="#16ffa1"/><rect x="1380" y="430" fill="#24ff9e"/><rect x="1390" y="430" fill="#34ff9c"/><rect x="1400" y="430" fill="#48ff99"/><rect x="1410" y="430" fill="#5eff97"/><rect x="1420" y="430" fill="#77ff94"/><rect x="1430" y="430" fill="#94ff91"/><rect x="1440" y="430" fill="#b4ff8e"/><rect x="1450" y="430" fill="#d7ff8b"/><rect x="1460" y="430" fill="#ffff88"/><rect x="1470" y="430" fill="#ffd971"/><rect x="1480" y="430" fill="#ffbb5f"/><rect x="1490" y="430" fill="#ffa250"/><rect x="1500" y="430" fill="#ff8d43"/><rect x="1510" y="430" fill="#ff7b39"/><rect x="1520" y="430" fill="#ff6c30"/><rect x="1530" y="430" fill="#ff5f29"/><rect x="1540" y="430" fill="#ff5423"/><rect x="1550" y="430" fill="#ff4b1d"/><rect x="1560" y="430" fill="#ff4219"/><rect x="1570" y="430" fill="#ff3b15"/><rect x="1580" y="430" fill="#ff3411"/><rect x="1590" y="430" fill="#ff2f0e"/><rect x="1600" y="430" fill="#ff2a0c"/><rect x="1610" y="430" fill="#ff250a"/><rect x="1620" y="430" fill="#ff2108"/><rect x="1630" y="430" fill="#ff1d06"/><rect x="1640" y="430" fill="#ff1a05"/><rect x="1650" y="430" fill="#ff1703"/><rect x="1660" y="430" fill="#ff1502"/><rect x="1670" y="430" fill="#ff1202"/><rect x="1680" y="430" fill="#ff1001"/><rect x="1690" y="430" fill="#ff0e00"/><rect x="1700" y="430" fill="#ff0c00"/><rect x="1710" y="430" fill="#ff0b00"/><rect x="1720" y="430" fill="#ff0900"/><rect x="1730" y="430" fill="#ff0800"/><rect x="1330" y="440" fill="#00ffc4"/><rect x="1340" y="440" fill="#00ffc2"/><rect x="1350" y="440" fill="#05ffc1"/><rect x="1360" y="440" fill="#0fffbf"/><rect x="1370" y="440" fill="#1cffbd"/><rect x="1380" y="440" fill="#2bffbb"/><rect x="1390" y="440" fill="#3effb9"/><rect x="1400" y="440" fill="#54ffb7"/><rect x="1410" y="440" fill="#6effb4"/><rect x="1420" y="440" fill="#8bffb2"/><rect x="1430" y="440" fill="#abffaf"/><rect x="1440" y="440" fill="#d0ffad"/><rect x="1450" y="440" fill="#f9ffaa"/><rect x="1460" y="440" fill="#ffdc91"/><rect x="1470" y="440" fill="#ffbc79"/><rect x="1480" y="440" fill="#ffa166"/><rect x="1490" y="440" fill="#ff8b56"/><rect x="1500" y="440" fill="#ff7949"/><rect x="1510" y="440" fill="#ff6a3f"/><rect x="1520" y="440" fill="#ff5d35"/><rect x="1530" y="440" fill="#ff512e"/><rect x="1540" y="440" fill="#ff4827"/><rect x="1550" y="440" fill="#ff3f21"/><rect x="1560" y="440" fill="#ff381c"/><rect x="1570" y="440" fill="#ff3118"/><rect x="1580" y="440" fill="#ff2c14"/><rect x="1590" y="440" fill="#ff2711"/><rect x="1600" y="440" fill="#ff220e"/><rect x="1610" y="440" fill="#ff1e0c"/><rect x="1620" y="440" fill="#ff1b0a"/><rect x="1630" y="440" fill="#ff1808"/><rect x="1640" y="440" fill="#ff1506"/><rect x="1650" y="440" fill="#ff1205"/><rect x="1660" y="440" fill="#ff1004"/><rect x="1670" y="440" fill="#ff0e03"/><rect x="1680" y="440" fill="#ff0c02"/><rect x="1690" y="440" fill="#ff0b01"/><rect x="1700" y="440" fill="#ff0901"/><rect x="1710" y="440" fill="#ff0800"/><rect x="1720" y="440" fill="#ff0700"/><rect x="1730" y="440" fill="#ff0500"/><rect x="1740" y="440" fill="#ff0500"/><rect x="1330" y="450" fill="#00ffe4"/><rect x="1340" y="450" fill="#01ffe2"/><rect x="1350" y="450" fill="#08ffe1"/><rect x="1360" y="450" fill="#13ffe0"/><rect x="1370" y="450" fill="#22ffdf"/><rect x="1380" y="450" fill="#35ffdd"/><rect x="1390" y="450" fill="#4affdc"/><rect x="1400" y="450" fill="#64ffda"/><rect x="1410" y="450" fill="#81ffd8"/><rect x="1420" y="450" fill="#a2ffd7"/><rect x="1430" y="450" fill="#c8ffd5"/><rect x="1440" y="450" fill="#f3ffd3"/><rect x="1450" y="450" fill="#ffe0b7"/><rect x="1460" y="450" fill="#ffbd99"/><rect x="1470" y="450" fill="#ffa181"/><rect x="1480" y="450" fill="#ff8a6d"/><rect x="1490" y="450" fill="#ff775d"/><rect x="1500" y="450" fill="#ff6750"/><rect x="1510" y="450" fill="#ff5a44"/><rect x="1520" y="450" fill="#ff4e3b"/><rect x="1530" y="450" fill="#ff4432"/><rect x="1540" y="450" fill="#ff3c2b"/><rect x="1550" y="450" fill="#ff3525"/><rect x="1560" y="450" fill="#ff2e20"/><rect x="1570" y="450" fill="#ff291c"/><rect x="1580" y="450" fill="#ff2418"/><rect x="1590" y="450" fill="#ff1f14"/><rect x="1600" y="450" fill="#ff1c11"/><rect x="1610" y="450" fill="#ff180e"/><rect x="1620" y="450" fill="#ff150c"/><rect x="1630" y="450" fill="#ff120a"/><rect x="1640" y="450" fill="#ff1008"/><rect x="1650" y="450" fill="#ff0e07"/><rect x="1660" y="450" fill="#ff0c05"/><rect x="1670" y="450" fill="#ff0a04"/><rect x="1680" y="450" fill="#ff0903"/><rect x="1690" y="450" fill="#ff0702"/><rect x="1700" y="450" fill="#ff0601"/><rect x="1710" y="450" fill="#ff0501"/><rect x="1720" y="450" fill="#ff0400"/><rect x="1730" y="450" fill="#ff0300"/><rect x="1740" y="450" fill="#ff0300"/><rect x="1750" y="450" fill="#ff0200"/><rect x="1760" y="450" fill="#ff0100"/><rect x="1330" y="460" fill="#00f5ff"/><rect x="1340" y="460" fill="#03f5ff"/><rect x="1350" y="460" fill="#0bf6ff"/><rect x="1360" y="460" fill="#18f6ff"/><rect x="1370" y="460" fill="#29f7ff"/><rect x="1380" y="460" fill="#3ef7ff"/><rect x="1390" y="460" fill="#57f8ff"/><rect x="1400" y="460" fill="#73f9ff"/><rect x="1410" y="460" fill="#95f9ff"/><rect x="1420" y="460" fill="#bbfaff"/><rect x="1430" y="460" fill="#e7fbff"/><rect x="1440" y="460" fill="#ffe4e7"/><rect x="1450" y="460" fill="#ffbec0"/><rect x="1460" y="460" fill="#ffa0a2"/><rect x="1470" y="460" fill="#ff8889"/><rect x="1480" y="460" fill="#ff7474"/><rect x="1490" y="460" fill="#ff6464"/><rect x="1500" y="460" fill="#ff5656"/><rect x="1510" y="460" fill="#ff4b4a"/><rect x="1520" y="460" fill="#ff4140"/><rect x="1530" y="460" fill="#ff3937"/><rect x="1540" y="460" fill="#ff3130"/><rect x="1550" y="460" fill="#ff2b29"/><rect x="1560" y="460" fill="#ff2624"/><rect x="1570" y="460" fill="#ff211f"/><rect x="1580" y="460" fill="#ff1d1b"/><rect x="1590" y="460" fill="#ff1917"/><rect x="1600" y="460" fill="#ff1614"/><rect x="1610" y="460" fill="#ff1311"/><rect x="1620" y="460" fill="#ff100e"/><rect x="1630" y="460" fill="#ff0e0c"/><rect x="1640" y="460" fill="#ff0c0a"/><rect x="1650" y="460" fill="#ff0a08"/><rect x="1660" y="460" fill="#ff0807"/><rect x="1670" y="460" fill="#ff0706"/><rect x="1680" y="460" fill="#ff0604"/><rect x="1690" y="460" fill="#ff0503"/><rect x="1700" y="460" fill="#ff0402"/><rect x="1710" y="460" fill="#ff0302"/><rect x="1720" y="460" fill="#ff0201"/><rect x="1730" y="460" fill="#ff0201"/><rect x="1740" y="460" fill="#ff0100"/><rect x="1750" y="460" fill="#ff0100"/><rect x="1760" y="460" fill="#ff0000"/><rect x="1320" y="470" fill="#00d2ff"/><rect x="1330" y="470" fill="#00d1ff"/><rect x="1340" y="470" fill="#04d1ff"/><rect x="1350" y="470" fill="#0dd1ff"/><rect x="1360" y="470" fill="#1ad0ff"/><rect x="1370" y="470" fill="#2bd0ff"/><rect x="1380" y="470" fill="#3fcfff"/><rect x="1390" y="470" fill="#57cfff"/><rect x="1400" y="470" fill="#72ceff"/><rect x="1410" y="470" fill="#92cdff"/><rect x="1420" y="470" fill="#b7cdff"/><rect x="1430" y="470" fill="#e0ccff"/><rect x="1440" y="470" fill="#ffc0f0"/><rect x="1450" y="470" fill="#ffa0c9"/><rect x="1460" y="470" fill="#ff86aa"/><rect x="1470" y="470" fill="#ff7290"/><rect x="1480" y="470" fill="#ff617c"/><rect x="1490" y="470" fill="#ff536a"/><rect x="1500" y="470" fill="#ff475c"/><rect x="1510" y="470" fill="#ff3e50"/><rect x="1520" y="470" fill="#ff3545"/><rect x="1530" y="470" fill="#ff2e3c"/><rect x="1540" y="470" fill="#ff2834"/><rect x="1550" y="470" fill="#ff222e"/><rect x="1560" y="470" fill="#ff1e28"/><rect x="1570" y="470" fill="#ff1a23"/><rect x="1580" y="470" fill="#ff161e"/><rect x="1590" y="470" fill="#ff131a"/><rect x="1600" y="470" fill="#ff1017"/><rect x="1610" y="470" fill="#ff0e14"/><rect x="1620" y="470" fill="#ff0c11"/><rect x="1630" y="470" fill="#ff0a0e"/><rect x="1640" y="470" fill="#ff080c"/><rect x="1650" y="470" fill="#ff070a"/><rect x="1660" y="470" fill="#ff0509"/><rect x="1670" y="470" fill="#ff0407"/><rect x="1680" y="470" fill="#ff0306"/><rect x="1690" y="470" fill="#ff0205"/><rect x="1700" y="470" fill="#ff0204"/><rect x="1710" y="470" fill="#ff0103"/><rect x="1720" y="470" fill="#ff0102"/><rect x="1730" y="470" fill="#ff0001"/><rect x="1740" y="470" fill="#ff0001"/><rect x="1750" y="470" fill="#ff0000"/><rect x="1760" y="470" fill="#ff0000"/><rect x="1320" y="480" fill="#00b3ff"/><rect x="1330" y="480" fill="#00b2ff"/><rect x="1340" y="480" fill="#06b1ff"/><rect x="1350" y="480" fill="#0fb0ff"/><rect x="1360" y="480" fill="#1cafff"/><rect x="1370" y="480" fill="#2dadff"/><rect x="1380" y="480" fill="#40acff"/><rect x="1390" y="480" fill="#57abff"/><rect x="1400" y="480" fill="#72a9ff"/><rect x="1410" y="480" fill="#90a8ff"/><rect x="1420" y="480" fill="#b2a6ff"/><rect x="1430" y="480" fill="#d9a5ff"/><rect x="1440" y="480" fill="#ff9ff9"/><rect x="1450" y="480" fill="#ff84d1"/><rect x="1460" y="480" fill="#ff6fb2"/><rect x="1470" y="480" fill="#ff5e98"/><rect x="1480" y="480" fill="#ff4f83"/><rect x="1490" y="480" fill="#ff4471"/><rect x="1500" y="480" fill="#ff3a62"/><rect x="1510" y="480" fill="#ff3155"/><rect x="1520" y="480" fill="#ff2a4a"/><rect x="1530" y="480" fill="#ff2441"/><rect x="1540" y="480" fill="#ff1f39"/><rect x="1550" y="480" fill="#ff1a32"/><rect x="1560" y="480" fill="#ff172c"/><rect x="1570" y="480" fill="#ff1326"/><rect x="1580" y="480" fill="#ff1022"/><rect x="1590" y="480" fill="#ff0e1d"/><rect x="1600" y="480" fill="#ff0b1a"/><rect x="1610" y="480" fill="#ff0916"/><rect x="1620" y="480" fill="#ff0813"/><rect x="1630" y="480" fill="#ff0611"/><rect x="1640" y="480" fill="#ff050e"/><rect x="1650" y="480" fill="#ff040c"/><rect x="1660" y="480" fill="#ff030b"/><rect x="1670" y="480" fill="#ff0209"/><rect x="1680" y="480" fill="#ff0107"/><rect x="1690" y="480" fill="#ff0106"/><rect x="1700" y="480" fill="#ff0005"/><rect x="1710" y="480" fill="#ff0004"/><rect x="1720" y="480" fill="#ff0003"/><rect x="1730" y="480" fill="#ff0002"/><rect x="1740" y="480" fill="#ff0002"/><rect x="1750" y="480" fill="#ff0001"/><rect x="1320" y="490" fill="#0098ff"/><rect x="1330" y="490" fill="#0196ff"/><rect x="1340" y="490" fill="#0795ff"/><rect x="1350" y="490" fill="#1193ff"/><rect x="1360" y="490" fill="#1e91ff"/><rect x="1370" y="490" fill="#2e90ff"/><rect x="1380" y="490" fill="#418eff"/><rect x="1390" y="490" fill="#578cff"/><rect x="1400" y="490" fill="#718aff"/><rect x="1410" y="490" fill="#8e88ff"/><rect x="1420" y="490" fill="#ae86ff"/><rect x="1430" y="490" fill="#d383ff"/><rect x="1440" y="490" fill="#fd81ff"/><rect x="1450" y="490" fill="#ff6cda"/><rect x="1460" y="490" fill="#ff5ab9"/><rect x="1470" y="490" fill="#ff4b9f"/><rect x="1480" y="490" fill="#ff4089"/><rect x="1490" y="490" fill="#ff3677"/><rect x="1500" y="490" fill="#ff2d68"/><rect x="1510" y="490" fill="#ff265b"/><rect x="1520" y="490" fill="#ff2150"/><rect x="1530" y="490" fill="#ff1c46"/><rect x="1540" y="490" fill="#ff173d"/><rect x="1550" y="490" fill="#ff1336"/><rect x="1560" y="490" fill="#ff1030"/><rect x="1570" y="490" fill="#ff0e2a"/><rect x="1580" y="490" fill="#ff0b25"/><rect x="1590" y="490" fill="#ff0921"/><rect x="1600" y="490" fill="#ff071d"/><rect x="1610" y="490" fill="#ff0619"/><rect x="1620" y="490" fill="#ff0416"/><rect x="1630" y="490" fill="#ff0313"/><rect x="1640" y="490" fill="#ff0211"/><rect x="1650" y="490" fill="#ff020e"/><rect x="1660" y="490" fill="#ff010c"/><rect x="1670" y="490" fill="#ff000b"/><rect x="1680" y="490" fill="#ff0009"/><rect x="1690" y="490" fill="#ff0008"/><rect x="1700" y="490" fill="#ff0006"/><rect x="1710" y="490" fill="#ff0005"/><rect x="1720" y="490" fill="#ff0004"/><rect x="1320" y="500" fill="#0080ff"/><rect x="1330" y="500" fill="#027eff"/><rect x="1340" y="500" fill="#097cff"/><rect x="1350" y="500" fill="#137aff"/><rect x="1360" y="500" fill="#2078ff"/><rect x="1370" y="500" fill="#3076ff"/><rect x="1380" y="500" fill="#4273ff"/><rect x="1390" y="500" fill="#5871ff"/><rect x="1400" y="500" fill="#706fff"/><rect x="1410" y="500" fill="#8c6cff"/><rect x="1420" y="500" fill="#ab6aff"/><rect x="1430" y="500" fill="#ce67ff"/><rect x="1440" y="500" fill="#f564ff"/><rect x="1450" y="500" fill="#ff56e1"/><rect x="1460" y="500" fill="#ff47c1"/><rect x="1470" y="500" fill="#ff3ba6"/><rect x="1480" y="500" fill="#ff3190"/><rect x="1490" y="500" fill="#ff297e"/><rect x="1500" y="500" fill="#ff226e"/><rect x="1510" y="500" fill="#ff1d60"/><rect x="1520" y="500" fill="#ff1855"/><rect x="1530" y="500" fill="#ff144b"/><rect x="1540" y="500" fill="#ff1042"/><rect x="1550" y="500" fill="#ff0d3a"/><rect x="1560" y="500" fill="#ff0b34"/><rect x="1570" y="500" fill="#ff092e"/><rect x="1580" y="500" fill="#ff0728"/><rect x="1590" y="500" fill="#ff0524"/><rect x="1600" y="500" fill="#ff0420"/><rect x="1610" y="500" fill="#ff031c"/><rect x="1620" y="500" fill="#ff0219"/><rect x="1630" y="500" fill="#ff0116"/><rect x="1640" y="500" fill="#ff0113"/><rect x="1650" y="500" fill="#ff0011"/><rect x="1660" y="500" fill="#ff000f"/><rect x="1670" y="500" fill="#ff000d"/><rect x="1680" y="500" fill="#ff000b"/><rect x="1690" y="500" fill="#ff0009"/><rect x="1310" y="510" fill="#006cff"/><rect x="1320" y="510" fill="#006aff"/><rect x="1330" y="510" fill="#0368ff"/><rect x="1340" y="510" fill="#0b66ff"/><rect x="1350" y="510" fill="#1564ff"/><rect x="1360" y="510" fill="#2261ff"/><rect x="1370" y="510" fill="#315fff"/><rect x="1380" y="510" fill="#435dff"/><rect x="1390" y="510" fill="#585aff"/><rect x="1400" y="510" fill="#6f57ff"/><rect x="1410" y="510" fill="#8a55ff"/><rect x="1420" y="510" fill="#a752ff"/><rect x="1430" y="510" fill="#c94fff"/><rect x="1440" y="510" fill="#ee4cff"/><rect x="1450" y="510" fill="#ff42e9"/><rect x="1460" y="510" fill="#ff36c8"/><rect x="1470" y="510" fill="#ff2dad"/><rect x="1480" y="510" fill="#ff2597"/><rect x="1490" y="510" fill="#ff1e84"/><rect x="1500" y="510" fill="#ff1974"/><rect x="1510" y="510" fill="#ff1466"/><rect x="1520" y="510" fill="#ff105a"/><rect x="1530" y="510" fill="#ff0d50"/><rect x="1540" y="510" fill="#ff0a47"/><rect x="1550" y="510" fill="#ff083f"/><rect x="1560" y="510" fill="#ff0638"/><rect x="1570" y="510" fill="#ff0531"/><rect x="1580" y="510" fill="#ff032c"/><rect x="1590" y="510" fill="#ff0227"/><rect x="1600" y="510" fill="#ff0123"/><rect x="1610" y="510" fill="#ff011f"/><rect x="1620" y="510" fill="#ff001b"/><rect x="1630" y="510" fill="#ff0018"/><rect x="1640" y="510" fill="#ff0015"/><rect x="1650" y="510" fill="#ff0013"/><rect x="1660" y="510" fill="#ff0011"/><rect x="1310" y="520" fill="#005aff"/><rect x="1320" y="520" fill="#0057ff"/><rect x="1330" y="520" fill="#0555ff"/><rect x="1340" y="520" fill="#0d53ff"/><rect x="1350" y="520" fill="#1751ff"/><rect x="1360" y="520" fill="#234eff"/><rect x="1370" y="520" fill="#334cff"/><rect x="1380" y="520" fill="#4449ff"/><rect x="1390" y="520" fill="#5846ff"/><rect x="1400" y="520" fill="#6f43ff"/><rect x="1410" y="520" fill="#8841ff"/><rect x="1420" y="520" fill="#a43eff"/><rect x="1430" y="520" fill="#c43bff"/><rect x="1440" y="520" fill="#e737ff"/><rect x="1450" y="520" fill="#ff31f1"/><rect x="1460" y="520" fill="#ff28d0"/><rect x="1470" y="520" fill="#ff20b4"/><rect x="1480" y="520" fill="#ff1a9d"/><rect x="1490" y="520" fill="#ff158a"/><rect x="1500" y="520" fill="#ff1179"/><rect x="1510" y="520" fill="#ff0d6b"/><rect x="1520" y="520" fill="#ff0a5f"/><rect x="1530" y="520" fill="#ff0854"/><rect x="1540" y="520" fill="#ff064b"/><rect x="1550" y="520" fill="#ff0443"/><rect x="1560" y="520" fill="#ff033c"/><rect x="1570" y="520" fill="#ff0235"/><rect x="1580" y="520" fill="#ff0130"/><rect x="1590" y="520" fill="#ff002a"/><rect x="1600" y="520" fill="#ff0026"/><rect x="1610" y="520" fill="#ff0022"/><rect x="1620" y="520" fill="#ff001e"/><rect x="1630" y="520" fill="#ff001b"/><rect x="1310" y="530" fill="#0049ff"/><rect x="1320" y="530" fill="#0147ff"/><rect x="1330" y="530" fill="#0645ff"/><rect x="1340" y="530" fill="#0e42ff"/><rect x="1350" y="530" fill="#1940ff"/><rect x="1360" y="530" fill="#253dff"/><rect x="1370" y="530" fill="#343bff"/><rect x="1380" y="530" fill="#4538ff"/><rect x="1390" y="530" fill="#5835ff"/><rect x="1400" y="530" fill="#6e33ff"/><rect x="1410" y="530" fill="#8630ff"/><rect x="1420" y="530" fill="#a22dff"/><rect x="1430" y="530" fill="#c02aff"/><rect x="1440" y="530" fill="#e127ff"/><rect x="1450" y="530" fill="#ff23f8"/><rect x="1460" y="530" fill="#ff1bd7"/><rect x="1470" y="530" fill="#ff15bb"/><rect x="1480" y="530" fill="#ff11a4"/><rect x="1490" y="530" fill="#ff0d90"/><rect x="1500" y="530" fill="#ff0a7f"/><rect x="1510" y="530" fill="#ff0771"/><rect x="1520" y="530" fill="#ff0564"/><rect x="1530" y="530" fill="#ff0359"/><rect x="1540" y="530" fill="#ff0250"/><rect x="1550" y="530" fill="#ff0147"/><rect x="1560" y="530" fill="#ff0040"/><rect x="1570" y="530" fill="#ff0039"/><rect x="1580" y="530" fill="#ff0033"/><rect x="1590" y="530" fill="#ff002e"/><rect x="1600" y="530" fill="#ff0029"/><rect x="1310" y="540" fill="#003bff"/><rect x="1320" y="540" fill="#0238ff"/><rect x="1330" y="540" fill="#0836ff"/><rect x="1340" y="540" fill="#1034ff"/><rect x="1350" y="540" fill="#1a31ff"/><rect x="1360" y="540" fill="#272fff"/><rect x="1370" y="540" fill="#352cff"/><rect x="1380" y="540" fill="#462aff"/><rect x="1390" y="540" fill="#5827ff"/><rect x="1400" y="540" fill="#6d24ff"/><rect x="1410" y="540" fill="#8522ff"/><rect x="1420" y="540" fill="#9f1fff"/><rect x="1430" y="540" fill="#bc1cff"/><rect x="1440" y="540" fill="#dc19ff"/><rect x="1450" y="540" fill="#ff16ff"/><rect x="1460" y="540" fill="#ff11dd"/><rect x="1470" y="540" fill="#ff0cc2"/><rect x="1480" y="540" fill="#ff09aa"/><rect x="1490" y="540" fill="#ff0696"/><rect x="1500" y="540" fill="#ff0485"/><rect x="1510" y="540" fill="#ff0376"/><rect x="1520" y="540" fill="#ff0169"/><rect x="1530" y="540" fill="#ff005e"/><rect x="1540" y="540" fill="#ff0054"/><rect x="1550" y="540" fill="#ff004b"/><rect x="1560" y="540" fill="#ff0044"/><rect x="1570" y="540" fill="#ff003d"/><rect x="1580" y="540" fill="#ff0037"/><rect x="1300" y="550" fill="#0030ff"/><rect x="1310" y="550" fill="#002eff"/><rect x="1320" y="550" fill="#032cff"/><rect x="1330" y="550" fill="#0929ff"/><rect x="1340" y="550" fill="#1127ff"/><rect x="1350" y="550" fill="#1c25ff"/><rect x="1360" y="550" fill="#2822ff"/><rect x="1370" y="550" fill="#3620ff"/><rect x="1380" y="550" fill="#461dff"/><rect x="1390" y="550" fill="#581bff"/><rect x="1400" y="550" fill="#6d18ff"/><rect x="1410" y="550" fill="#8416ff"/><rect x="1420" y="550" fill="#9d13ff"/><rect x="1430" y="550" fill="#b811ff"/><rect x="1440" y="550" fill="#d70eff"/><rect x="1450" y="550" fill="#f80cff"/><rect x="1460" y="550" fill="#ff08e4"/><rect x="1470" y="550" fill="#ff06c8"/><rect x="1480" y="550" fill="#ff03b0"/><rect x="1490" y="550" fill="#ff029c"/><rect x="1500" y="550" fill="#ff018a"/><rect x="1510" y="550" fill="#ff007b"/><rect x="1520" y="550" fill="#ff006e"/><rect x="1530" y="550" fill="#ff0063"/><rect x="1540" y="550" fill="#ff0059"/><rect x="1550" y="550" fill="#ff0050"/><rect x="1300" y="560" fill="#0025ff"/><rect x="1310" y="560" fill="#0023ff"/><rect x="1320" y="560" fill="#0421ff"/><rect x="1330" y="560" fill="#0b1fff"/><rect x="1340" y="560" fill="#131cff"/><rect x="1350" y="560" fill="#1d1aff"/><rect x="1360" y="560" fill="#2918ff"/><rect x="1370" y="560" fill="#3716ff"/><rect x="1380" y="560" fill="#4713ff"/><rect x="1390" y="560" fill="#5911ff"/><rect x="1400" y="560" fill="#6c0fff"/><rect x="1410" y="560" fill="#820dff"/><rect x="1420" y="560" fill="#9a0aff"/><rect x="1430" y="560" fill="#b508ff"/><rect x="1440" y="560" fill="#d206ff"/><rect x="1450" y="560" fill="#f204ff"/><rect x="1460" y="560" fill="#ff02eb"/><rect x="1470" y="560" fill="#ff01ce"/><rect x="1480" y="560" fill="#ff00b6"/><rect x="1490" y="560" fill="#ff00a2"/><rect x="1500" y="560" fill="#ff0090"/><rect x="1510" y="560" fill="#ff0081"/><rect x="1520" y="560" fill="#ff0073"/><rect x="1300" y="570" fill="#001cff"/><rect x="1310" y="570" fill="#011aff"/><rect x="1320" y="570" fill="#0517ff"/><rect x="1330" y="570" fill="#0c15ff"/><rect x="1340" y="570" fill="#1413ff"/><rect x="1350" y="570" fill="#1f11ff"/><rect x="1360" y="570" fill="#2a0fff"/><rect x="1370" y="570" fill="#380dff"/><rect x="1380" y="570" fill="#480bff"/><rect x="1390" y="570" fill="#5909ff"/><rect x="1400" y="570" fill="#6c07ff"/><rect x="1410" y="570" fill="#8106ff"/><rect x="1420" y="570" fill="#9804ff"/><rect x="1430" y="570" fill="#b202ff"/><rect x="1440" y="570" fill="#ce01ff"/><rect x="1450" y="570" fill="#ed00ff"/><rect x="1460" y="570" fill="#ff00f1"/><rect x="1470" y="570" fill="#ff00d4"/><rect x="1480" y="570" fill="#ff00bc"/><rect x="1490" y="570" fill="#ff00a7"/><rect x="1300" y="580" fill="#0013ff"/><rect x="1310" y="580" fill="#0212ff"/><rect x="1320" y="580" fill="#0710ff"/><rect x="1330" y="580" fill="#0d0eff"/><rect x="1340" y="580" fill="#160cff"/><rect x="1350" y="580" fill="#200aff"/><rect x="1360" y="580" fill="#2c08ff"/><rect x="1370" y="580" fill="#3907ff"/><rect x="1380" y="580" fill="#4805ff"/><rect x="1390" y="580" fill="#5904ff"/><rect x="1400" y="580" fill="#6b02ff"/><rect x="1410" y="580" fill="#8001ff"/><rect x="1420" y="580" fill="#9600ff"/><rect x="1430" y="580" fill="#af00ff"/><rect x="1440" y="580" fill="#ca00ff"/><rect x="1450" y="580" fill="#e700ff"/><rect x="1460" y="580" fill="#ff00f7"/><rect x="1290" y="590" fill="#000eff"/><rect x="1300" y="590" fill="#000dff"/><rect x="1310" y="590" fill="#030bff"/><rect x="1320" y="590" fill="#0809ff"/><rect x="1330" y="590" fill="#0f08ff"/><rect x="1340" y="590" fill="#1706ff"/><rect x="1350" y="590" fill="#2105ff"/><rect x="1360" y="590" fill="#2d03ff"/><rect x="1370" y="590" fill="#3a02ff"/><rect x="1380" y="590" fill="#4901ff"/><rect x="1390" y="590" fill="#5900ff"/><rect x="1400" y="590" fill="#6b00ff"/><rect x="1410" y="590" fill="#7f00ff"/><rect x="1420" y="590" fill="#9500ff"/><rect x="1430" y="590" fill="#ac00ff"/><rect x="1290" y="600" fill="#0008ff"/><rect x="1300" y="600" fill="#0007ff"/><rect x="1310" y="600" fill="#0406ff"/><rect x="1320" y="600" fill="#0904ff"/><rect x="1330" y="600" fill="#1003ff"/><rect x="1340" y="600" fill="#1902ff"/><rect x="1350" y="600" fill="#2301ff"/><rect x="1360" y="600" fill="#2e00ff"/><rect x="1370" y="600" fill="#3b00ff"/><rect x="1380" y="600" fill="#4900ff"/><rect x="1390" y="600" fill="#5900ff"/><rect x="1400" y="600" fill="#6b00ff"/><rect x="1290" y="610" fill="#0004ff"/><rect x="1300" y="610" fill="#0103ff"/><rect x="1310" y="610" fill="#0502ff"/><rect x="1320" y="610" fill="#0a01ff"/><rect x="1330" y="610" fill="#1100ff"/><rect x="1340" y="610" fill="#1a00ff"/><rect x="1350" y="610" fill="#2400ff"/><rect x="1360" y="610" fill="#2f00ff"/><rect x="1370" y="610" fill="#3c00ff"/><rect x="1290" y="620" fill="#0001ff"/><rect x="1300" y="620" fill="#0200ff"/><rect x="1310" y="620" fill="#0600ff"/><rect x="1320" y="620" fill="#0c00ff"/><rect x="1330" y="620" fill="#1300ff"/><rect x="1340" y="620" fill="#1b00ff"/><rect x="1290" y="630" fill="#0000ff"/><rect x="1300" y="630" fill="#0200ff"/><rect x="1310" y="630" fill="#0700ff"/></g></g><g clip-path="url(#clIns)"><g class="n" filter="url(#bl8)"><rect x="1632" y="144" fill="#16ff71"/><rect x="1644" y="144" fill="#1cff6f"/><rect x="1656" y="144" fill="#24ff6e"/><rect x="1668" y="144" fill="#2bff6d"/><rect x="1680" y="144" fill="#33ff6b"/><rect x="1692" y="144" fill="#3cff69"/><rect x="1704" y="144" fill="#45ff68"/><rect x="1716" y="144" fill="#4fff66"/><rect x="1728" y="144" fill="#58ff65"/><rect x="1740" y="144" fill="#63ff63"/><rect x="1752" y="144" fill="#6dff61"/><rect x="1764" y="144" fill="#79ff60"/><rect x="1776" y="144" fill="#84ff5e"/><rect x="1788" y="144" fill="#90ff5c"/><rect x="1800" y="144" fill="#9dff5a"/><rect x="1812" y="144" fill="#aaff59"/><rect x="1824" y="144" fill="#b8ff57"/><rect x="1836" y="144" fill="#c6ff55"/><rect x="1848" y="144" fill="#d4ff53"/><rect x="1860" y="144" fill="#e4ff51"/><rect x="1872" y="144" fill="#f3ff4f"/><rect x="1884" y="144" fill="#fffa4b"/><rect x="1896" y="144" fill="#ffeb45"/><rect x="1632" y="156" fill="#18ff79"/><rect x="1644" y="156" fill="#1fff78"/><rect x="1656" y="156" fill="#27ff76"/><rect x="1668" y="156" fill="#2fff75"/><rect x="1680" y="156" fill="#37ff73"/><rect x="1692" y="156" fill="#40ff72"/><rect x="1704" y="156" fill="#4aff70"/><rect x="1716" y="156" fill="#54ff6f"/><rect x="1728" y="156" fill="#5eff6d"/><rect x="1740" y="156" fill="#69ff6b"/><rect x="1752" y="156" fill="#74ff6a"/><rect x="1764" y="156" fill="#80ff68"/><rect x="1776" y="156" fill="#8cff66"/><rect x="1788" y="156" fill="#99ff65"/><rect x="1800" y="156" fill="#a6ff63"/><rect x="1812" y="156" fill="#b4ff61"/><rect x="1824" y="156" fill="#c2ff5f"/><rect x="1836" y="156" fill="#d1ff5d"/><rect x="1848" y="156" fill="#e0ff5b"/><rect x="1860" y="156" fill="#f0ff59"/><rect x="1872" y="156" fill="#fffd57"/><rect x="1884" y="156" fill="#ffed4f"/><rect x="1896" y="156" fill="#ffde49"/><rect x="1632" y="168" fill="#1bff82"/><rect x="1644" y="168" fill="#22ff81"/><rect x="1656" y="168" fill="#2aff7f"/><rect x="1668" y="168" fill="#33ff7e"/><rect x="1680" y="168" fill="#3bff7c"/><rect x="1692" y="168" fill="#45ff7b"/><rect x="1704" y="168" fill="#4fff79"/><rect x="1716" y="168" fill="#59ff78"/><rect x="1728" y="168" fill="#64ff76"/><rect x="1740" y="168" fill="#6fff75"/><rect x="1752" y="168" fill="#7bff73"/><rect x="1764" y="168" fill="#88ff71"/><rect x="1776" y="168" fill="#94ff70"/><rect x="1788" y="168" fill="#a2ff6e"/><rect x="1800" y="168" fill="#b0ff6c"/><rect x="1812" y="168" fill="#beff6a"/><rect x="1824" y="168" fill="#cdff68"/><rect x="1836" y="168" fill="#ddff67"/><rect x="1848" y="168" fill="#edff65"/><rect x="1860" y="168" fill="#feff63"/><rect x="1872" y="168" fill="#ffef5b"/><rect x="1884" y="168" fill="#ffe053"/><rect x="1896" y="168" fill="#ffd24c"/><rect x="1632" y="180" fill="#1dff8c"/><rect x="1644" y="180" fill="#25ff8a"/><rect x="1656" y="180" fill="#2eff89"/><rect x="1668" y="180" fill="#37ff88"/><rect x="1680" y="180" fill="#40ff86"/><rect x="1692" y="180" fill="#4aff85"/><rect x="1704" y="180" fill="#54ff83"/><rect x="1716" y="180" fill="#5fff82"/><rect x="1728" y="180" fill="#6bff80"/><rect x="1740" y="180" fill="#76ff7e"/><rect x="1752" y="180" fill="#83ff7d"/><rect x="1764" y="180" fill="#90ff7b"/><rect x="1776" y="180" fill="#9dff7a"/><rect x="1788" y="180" fill="#acff78"/><rect x="1800" y="180" fill="#baff76"/><rect x="1812" y="180" fill="#caff74"/><rect x="1824" y="180" fill="#d9ff72"/><rect x="1836" y="180" fill="#eaff71"/><rect x="1848" y="180" fill="#fbff6f"/><rect x="1860" y="180" fill="#fff267"/><rect x="1872" y="180" fill="#ffe25f"/><rect x="1884" y="180" fill="#ffd457"/><rect x="1896" y="180" fill="#ffc750"/><rect x="1632" y="192" fill="#20ff96"/><rect x="1644" y="192" fill="#29ff95"/><rect x="1656" y="192" fill="#31ff93"/><rect x="1668" y="192" fill="#3bff92"/><rect x="1680" y="192" fill="#45ff91"/><rect x="1692" y="192" fill="#4fff8f"/><rect x="1704" y="192" fill="#5aff8e"/><rect x="1716" y="192" fill="#66ff8c"/><rect x="1728" y="192" fill="#72ff8b"/><rect x="1740" y="192" fill="#7eff89"/><rect x="1752" y="192" fill="#8bff88"/><rect x="1764" y="192" fill="#99ff86"/><rect x="1776" y="192" fill="#a7ff84"/><rect x="1788" y="192" fill="#b6ff83"/><rect x="1800" y="192" fill="#c6ff81"/><rect x="1812" y="192" fill="#d6ff7f"/><rect x="1824" y="192" fill="#e7ff7d"/><rect x="1836" y="192" fill="#f8ff7c"/><rect x="1848" y="192" fill="#fff475"/><rect x="1860" y="192" fill="#ffe46b"/><rect x="1872" y="192" fill="#ffd562"/><rect x="1884" y="192" fill="#ffc85b"/><rect x="1896" y="192" fill="#ffbb54"/><rect x="1632" y="204" fill="#24ffa1"/><rect x="1644" y="204" fill="#2cffa0"/><rect x="1656" y="204" fill="#36ff9e"/><rect x="1668" y="204" fill="#3fff9d"/><rect x="1680" y="204" fill="#4aff9c"/><rect x="1692" y="204" fill="#55ff9a"/><rect x="1704" y="204" fill="#60ff99"/><rect x="1716" y="204" fill="#6cff98"/><rect x="1728" y="204" fill="#79ff96"/><rect x="1740" y="204" fill="#86ff95"/><rect x="1752" y="204" fill="#94ff93"/><rect x="1764" y="204" fill="#a3ff92"/><rect x="1776" y="204" fill="#b2ff90"/><rect x="1788" y="204" fill="#c2ff8f"/><rect x="1800" y="204" fill="#d2ff8d"/><rect x="1812" y="204" fill="#e3ff8b"/><rect x="1824" y="204" fill="#f5ff89"/><rect x="1836" y="204" fill="#fff783"/><rect x="1848" y="204" fill="#ffe679"/><rect x="1860" y="204" fill="#ffd66f"/><rect x="1872" y="204" fill="#ffc966"/><rect x="1884" y="204" fill="#ffbc5e"/><rect x="1896" y="204" fill="#ffb057"/><rect x="1632" y="216" fill="#27ffad"/><rect x="1644" y="216" fill="#30ffac"/><rect x="1656" y="216" fill="#3affaa"/><rect x="1668" y="216" fill="#45ffa9"/><rect x="1680" y="216" fill="#50ffa8"/><rect x="1692" y="216" fill="#5bffa7"/><rect x="1704" y="216" fill="#67ffa5"/><rect x="1716" y="216" fill="#74ffa4"/><rect x="1728" y="216" fill="#81ffa3"/><rect x="1740" y="216" fill="#8fffa1"/><rect x="1752" y="216" fill="#9effa0"/><rect x="1764" y="216" fill="#adff9f"/><rect x="1776" y="216" fill="#bdff9d"/><rect x="1788" y="216" fill="#ceff9b"/><rect x="1800" y="216" fill="#dfff9a"/><rect x="1812" y="216" fill="#f2ff98"/><rect x="1824" y="216" fill="#fffa93"/><rect x="1836" y="216" fill="#ffe888"/><rect x="1848" y="216" fill="#ffd87d"/><rect x="1860" y="216" fill="#ffca73"/><rect x="1872" y="216" fill="#ffbc6a"/><rect x="1884" y="216" fill="#ffb062"/><rect x="1896" y="216" fill="#ffa55b"/><rect x="1632" y="228" fill="#2bffba"/><rect x="1644" y="228" fill="#35ffb9"/><rect x="1656" y="228" fill="#3fffb8"/><rect x="1668" y="228" fill="#4affb6"/><rect x="1680" y="228" fill="#56ffb5"/><rect x="1692" y="228" fill="#62ffb4"/><rect x="1704" y="228" fill="#6fffb3"/><rect x="1716" y="228" fill="#7cffb2"/><rect x="1728" y="228" fill="#8affb0"/><rect x="1740" y="228" fill="#99ffaf"/><rect x="1752" y="228" fill="#a9ffae"/><rect x="1764" y="228" fill="#b9ffac"/><rect x="1776" y="228" fill="#caffab"/><rect x="1788" y="228" fill="#dcffaa"/><rect x="1800" y="228" fill="#eeffa8"/><rect x="1812" y="228" fill="#fffda5"/><rect x="1824" y="228" fill="#ffea98"/><rect x="1836" y="228" fill="#ffda8c"/><rect x="1848" y="228" fill="#ffcb81"/><rect x="1860" y="228" fill="#ffbd77"/><rect x="1872" y="228" fill="#ffb16e"/><rect x="1884" y="228" fill="#ffa566"/><rect x="1896" y="228" fill="#ff9b5e"/><rect x="1632" y="240" fill="#2fffc8"/><rect x="1644" y="240" fill="#39ffc7"/><rect x="1656" y="240" fill="#44ffc6"/><rect x="1668" y="240" fill="#50ffc5"/><rect x="1680" y="240" fill="#5cffc4"/><rect x="1692" y="240" fill="#69ffc3"/><rect x="1704" y="240" fill="#77ffc2"/><rect x="1716" y="240" fill="#85ffc0"/><rect x="1728" y="240" fill="#94ffbf"/><rect x="1740" y="240" fill="#a4ffbe"/><rect x="1752" y="240" fill="#b4ffbd"/><rect x="1764" y="240" fill="#c5ffbc"/><rect x="1776" y="240" fill="#d7ffbb"/><rect x="1788" y="240" fill="#eaffb9"/><rect x="1800" y="240" fill="#feffb8"/><rect x="1812" y="240" fill="#ffeda9"/><rect x="1824" y="240" fill="#ffdb9c"/><rect x="1836" y="240" fill="#ffcc90"/><rect x="1848" y="240" fill="#ffbe85"/><rect x="1860" y="240" fill="#ffb17b"/><rect x="1872" y="240" fill="#ffa572"/><rect x="1884" y="240" fill="#ff9b69"/><rect x="1896" y="240" fill="#ff9162"/><rect x="1632" y="252" fill="#34ffd7"/><rect x="1644" y="252" fill="#3effd6"/><rect x="1656" y="252" fill="#4affd5"/><rect x="1668" y="252" fill="#56ffd4"/><rect x="1680" y="252" fill="#63ffd3"/><rect x="1692" y="252" fill="#71ffd2"/><rect x="1704" y="252" fill="#7fffd2"/><rect x="1716" y="252" fill="#8fffd1"/><rect x="1728" y="252" fill="#9fffd0"/><rect x="1740" y="252" fill="#afffcf"/><rect x="1752" y="252" fill="#c1ffce"/><rect x="1764" y="252" fill="#d3ffcd"/><rect x="1776" y="252" fill="#e6ffcc"/><rect x="1788" y="252" fill="#fbffca"/><rect x="1800" y="252" fill="#ffefbd"/><rect x="1812" y="252" fill="#ffddae"/><rect x="1824" y="252" fill="#ffcda0"/><rect x="1836" y="252" fill="#ffbf94"/><rect x="1848" y="252" fill="#ffb189"/><rect x="1860" y="252" fill="#ffa57f"/><rect x="1872" y="252" fill="#ff9a75"/><rect x="1884" y="252" fill="#ff906d"/><rect x="1896" y="252" fill="#ff8765"/><rect x="1632" y="264" fill="#38ffe7"/><rect x="1644" y="264" fill="#44ffe7"/><rect x="1656" y="264" fill="#50ffe6"/><rect x="1668" y="264" fill="#5dffe5"/><rect x="1680" y="264" fill="#6bffe5"/><rect x="1692" y="264" fill="#7affe4"/><rect x="1704" y="264" fill="#89ffe3"/><rect x="1716" y="264" fill="#99ffe2"/><rect x="1728" y="264" fill="#aaffe2"/><rect x="1740" y="264" fill="#bcffe1"/><rect x="1752" y="264" fill="#cfffe0"/><rect x="1764" y="264" fill="#e2ffdf"/><rect x="1776" y="264" fill="#f7ffde"/><rect x="1788" y="264" fill="#fff2d2"/><rect x="1800" y="264" fill="#ffdfc1"/><rect x="1812" y="264" fill="#ffcfb2"/><rect x="1824" y="264" fill="#ffbfa4"/><rect x="1836" y="264" fill="#ffb298"/><rect x="1848" y="264" fill="#ffa58c"/><rect x="1860" y="264" fill="#ff9a82"/><rect x="1872" y="264" fill="#ff9079"/><rect x="1884" y="264" fill="#ff8670"/><rect x="1896" y="264" fill="#ff7e69"/><rect x="1632" y="276" fill="#3efff9"/><rect x="1644" y="276" fill="#4afff9"/><rect x="1656" y="276" fill="#57fff8"/><rect x="1668" y="276" fill="#65fff8"/><rect x="1680" y="276" fill="#74fff7"/><rect x="1692" y="276" fill="#83fff7"/><rect x="1704" y="276" fill="#94fff6"/><rect x="1716" y="276" fill="#a5fff6"/><rect x="1728" y="276" fill="#b7fff5"/><rect x="1740" y="276" fill="#cafff5"/><rect x="1752" y="276" fill="#defff4"/><rect x="1764" y="276" fill="#f3fff4"/><rect x="1776" y="276" fill="#fff5ea"/><rect x="1788" y="276" fill="#ffe2d7"/><rect x="1800" y="276" fill="#ffd0c5"/><rect x="1812" y="276" fill="#ffc0b6"/><rect x="1824" y="276" fill="#ffb2a8"/><rect x="1836" y="276" fill="#ffa59c"/><rect x="1848" y="276" fill="#ff9a90"/><rect x="1860" y="276" fill="#ff8f86"/><rect x="1872" y="276" fill="#ff867d"/><rect x="1884" y="276" fill="#ff7d74"/><rect x="1896" y="276" fill="#ff756c"/><rect x="1632" y="288" fill="#40f2ff"/><rect x="1644" y="288" fill="#4df2ff"/><rect x="1656" y="288" fill="#5af2ff"/><rect x="1668" y="288" fill="#68f2ff"/><rect x="1680" y="288" fill="#77f3ff"/><rect x="1692" y="288" fill="#87f3ff"/><rect x="1704" y="288" fill="#98f3ff"/><rect x="1716" y="288" fill="#a9f3ff"/><rect x="1728" y="288" fill="#bcf3ff"/><rect x="1740" y="288" fill="#d0f3ff"/><rect x="1752" y="288" fill="#e4f4ff"/><rect x="1764" y="288" fill="#faf4ff"/><rect x="1776" y="288" fill="#ffe4ee"/><rect x="1788" y="288" fill="#ffd1db"/><rect x="1800" y="288" fill="#ffc1c9"/><rect x="1812" y="288" fill="#ffb2ba"/><rect x="1824" y="288" fill="#ffa5ac"/><rect x="1836" y="288" fill="#ff999f"/><rect x="1848" y="288" fill="#ff8f94"/><rect x="1860" y="288" fill="#ff858a"/><rect x="1872" y="288" fill="#ff7c80"/><rect x="1884" y="288" fill="#ff7377"/><rect x="1896" y="288" fill="#ff6c6f"/><rect x="1632" y="300" fill="#41e0ff"/><rect x="1644" y="300" fill="#4ee0ff"/><rect x="1656" y="300" fill="#5be0ff"/><rect x="1668" y="300" fill="#68e0ff"/><rect x="1680" y="300" fill="#77e0ff"/><rect x="1692" y="300" fill="#86dfff"/><rect x="1704" y="300" fill="#97dfff"/><rect x="1716" y="300" fill="#a8dfff"/><rect x="1728" y="300" fill="#badfff"/><rect x="1740" y="300" fill="#cddfff"/><rect x="1752" y="300" fill="#e1dfff"/><rect x="1764" y="300" fill="#f6dfff"/><rect x="1776" y="300" fill="#ffd3f2"/><rect x="1788" y="300" fill="#ffc2df"/><rect x="1800" y="300" fill="#ffb3cd"/><rect x="1812" y="300" fill="#ffa5be"/><rect x="1824" y="300" fill="#ff99b0"/><rect x="1836" y="300" fill="#ff8ea3"/><rect x="1848" y="300" fill="#ff8498"/><rect x="1860" y="300" fill="#ff7a8d"/><rect x="1872" y="300" fill="#ff7284"/><rect x="1884" y="300" fill="#ff6a7b"/><rect x="1896" y="300" fill="#ff6373"/><rect x="1632" y="312" fill="#42cfff"/><rect x="1644" y="312" fill="#4ecfff"/><rect x="1656" y="312" fill="#5bceff"/><rect x="1668" y="312" fill="#68ceff"/><rect x="1680" y="312" fill="#77ceff"/><rect x="1692" y="312" fill="#86cdff"/><rect x="1704" y="312" fill="#96cdff"/><rect x="1716" y="312" fill="#a7ccff"/><rect x="1728" y="312" fill="#b8ccff"/><rect x="1740" y="312" fill="#cbccff"/><rect x="1752" y="312" fill="#decbff"/><rect x="1764" y="312" fill="#f3cbff"/><rect x="1776" y="312" fill="#ffc3f6"/><rect x="1788" y="312" fill="#ffb3e3"/><rect x="1800" y="312" fill="#ffa5d1"/><rect x="1812" y="312" fill="#ff98c2"/><rect x="1824" y="312" fill="#ff8db4"/><rect x="1836" y="312" fill="#ff83a7"/><rect x="1848" y="312" fill="#ff799b"/><rect x="1860" y="312" fill="#ff7191"/><rect x="1872" y="312" fill="#ff6987"/><rect x="1884" y="312" fill="#ff627e"/><rect x="1896" y="312" fill="#ff5b76"/><rect x="1632" y="324" fill="#43bfff"/><rect x="1644" y="324" fill="#4fbfff"/><rect x="1656" y="324" fill="#5bbeff"/><rect x="1668" y="324" fill="#69bdff"/><rect x="1680" y="324" fill="#77bdff"/><rect x="1692" y="324" fill="#85bcff"/><rect x="1704" y="324" fill="#95bcff"/><rect x="1716" y="324" fill="#a5bbff"/><rect x="1728" y="324" fill="#b6baff"/><rect x="1740" y="324" fill="#c8baff"/><rect x="1752" y="324" fill="#dbb9ff"/><rect x="1764" y="324" fill="#efb8ff"/><rect x="1776" y="324" fill="#ffb4fa"/><rect x="1788" y="324" fill="#ffa5e7"/><rect x="1800" y="324" fill="#ff98d5"/><rect x="1812" y="324" fill="#ff8cc6"/><rect x="1824" y="324" fill="#ff82b7"/><rect x="1836" y="324" fill="#ff78ab"/><rect x="1848" y="324" fill="#ff6f9f"/><rect x="1860" y="324" fill="#ff6794"/><rect x="1872" y="324" fill="#ff608a"/><rect x="1884" y="324" fill="#ff5981"/><rect x="1896" y="324" fill="#ff5379"/><rect x="1632" y="336" fill="#44b0ff"/><rect x="1644" y="336" fill="#4fafff"/><rect x="1656" y="336" fill="#5cafff"/><rect x="1668" y="336" fill="#69aeff"/><rect x="1680" y="336" fill="#76adff"/><rect x="1692" y="336" fill="#85acff"/><rect x="1704" y="336" fill="#94abff"/><rect x="1716" y="336" fill="#a4abff"/><rect x="1728" y="336" fill="#b5aaff"/><rect x="1740" y="336" fill="#c6a9ff"/><rect x="1752" y="336" fill="#d9a8ff"/><rect x="1764" y="336" fill="#eca7ff"/><rect x="1776" y="336" fill="#ffa5fe"/><rect x="1788" y="336" fill="#ff98ea"/><rect x="1800" y="336" fill="#ff8bd9"/><rect x="1812" y="336" fill="#ff80c9"/><rect x="1824" y="336" fill="#ff77bb"/><rect x="1836" y="336" fill="#ff6eae"/><rect x="1848" y="336" fill="#ff65a2"/><rect x="1860" y="336" fill="#ff5e98"/><rect x="1872" y="336" fill="#ff578e"/><rect x="1884" y="336" fill="#ff5185"/><rect x="1896" y="336" fill="#ff4b7c"/><rect x="1632" y="348" fill="#45a2ff"/><rect x="1644" y="348" fill="#50a1ff"/><rect x="1656" y="348" fill="#5ca0ff"/><rect x="1668" y="348" fill="#699fff"/><rect x="1680" y="348" fill="#769eff"/><rect x="1692" y="348" fill="#849dff"/><rect x="1704" y="348" fill="#939cff"/><rect x="1716" y="348" fill="#a39bff"/><rect x="1728" y="348" fill="#b39aff"/><rect x="1740" y="348" fill="#c499ff"/><rect x="1752" y="348" fill="#d698ff"/><rect x="1764" y="348" fill="#e997ff"/><rect x="1776" y="348" fill="#fd95ff"/><rect x="1788" y="348" fill="#ff8aee"/><rect x="1800" y="348" fill="#ff7fdd"/><rect x="1812" y="348" fill="#ff75cd"/><rect x="1824" y="348" fill="#ff6cbf"/><rect x="1836" y="348" fill="#ff64b2"/><rect x="1848" y="348" fill="#ff5ca6"/><rect x="1860" y="348" fill="#ff559b"/><rect x="1872" y="348" fill="#ff4f91"/><rect x="1884" y="348" fill="#ff4988"/><rect x="1896" y="348" fill="#ff4480"/></g></g>
<rect x="1647" y="152.5" width="254" height="198.5" fill="none" stroke="#c8c8c8" stroke-width="1" opacity=".7"/>
<path d="M1162.7 675 V146.3 H1907.6 V668" class="grid"/>
<path d="M1156 668 H1907.6" class="grid"/>
<rect x="1161.7" y="668" width="2" height="7" fill="#aaa"/>
<text class="ax" x="1162.7" y="691.2" text-anchor="middle">0</text>
<rect x="1156" y="667.4" width="7" height="2" fill="#aaa"/>
<text class="ax" x="1155" y="674.0" text-anchor="end">0</text>
<rect x="1250.3" y="668" width="2" height="7" fill="#aaa"/>
<text class="ax" x="1251.3" y="691.2" text-anchor="middle">0.1</text>
<rect x="1156" y="605.3" width="7" height="2" fill="#aaa"/>
<text class="ax" x="1155" y="611.9" text-anchor="end">0.1</text>
<rect x="1338.9" y="668" width="2" height="7" fill="#aaa"/>
<text class="ax" x="1339.9" y="691.2" text-anchor="middle">0.2</text>
<rect x="1156" y="543.3" width="7" height="2" fill="#aaa"/>
<text class="ax" x="1155" y="549.9" text-anchor="end">0.2</text>
<rect x="1427.5" y="668" width="2" height="7" fill="#aaa"/>
<text class="ax" x="1428.5" y="691.2" text-anchor="middle">0.3</text>
<rect x="1156" y="481.2" width="7" height="2" fill="#aaa"/>
<text class="ax" x="1155" y="487.8" text-anchor="end">0.3</text>
<rect x="1516.1" y="668" width="2" height="7" fill="#aaa"/>
<text class="ax" x="1517.1" y="691.2" text-anchor="middle">0.4</text>
<rect x="1156" y="419.2" width="7" height="2" fill="#aaa"/>
<text class="ax" x="1155" y="425.8" text-anchor="end">0.4</text>
<rect x="1604.7" y="668" width="2" height="7" fill="#aaa"/>
<text class="ax" x="1605.7" y="691.2" text-anchor="middle">0.5</text>
<rect x="1156" y="357.1" width="7" height="2" fill="#aaa"/>
<text class="ax" x="1155" y="363.7" text-anchor="end">0.5</text>
<rect x="1693.3" y="668" width="2" height="7" fill="#aaa"/>
<text class="ax" x="1694.3" y="691.2" text-anchor="middle">0.6</text>
<rect x="1156" y="295.0" width="7" height="2" fill="#aaa"/>
<text class="ax" x="1155" y="301.6" text-anchor="end">0.6</text>
<rect x="1781.9" y="668" width="2" height="7" fill="#aaa"/>
<text class="ax" x="1782.9" y="691.2" text-anchor="middle">0.7</text>
<rect x="1156" y="233.0" width="7" height="2" fill="#aaa"/>
<text class="ax" x="1155" y="239.6" text-anchor="end">0.7</text>
<rect x="1870.5" y="668" width="2" height="7" fill="#aaa"/>
<text class="ax" x="1871.5" y="691.2" text-anchor="middle">0.8</text>
<rect x="1156" y="170.9" width="7" height="2" fill="#aaa"/>
<text class="ax" x="1155" y="177.5" text-anchor="end">0.8</text>
<rect x="1612.9" y="634" width="290.5" height="29" fill="#2c2c2c"/>
<text x="1614.5" y="656.5" font-size="21" fill="#f0f0f0" stroke="#f0f0f0" stroke-width=".45" textLength="254.5" lengthAdjust="spacingAndGlyphs" xml:space="preserve">Gamut Coverage:  89.2%</text>
<rect x="1757.8" y="459.9" width="15.5" height="15.5" fill="none" stroke="#ffffff" stroke-width="2.2" opacity="0.85"/>
<rect x="1389.8" y="231.4" width="15.5" height="15.5" fill="none" stroke="#ffffff" stroke-width="2.2" opacity="0.85"/>
<rect x="1286.2" y="622.5" width="15.5" height="15.5" fill="none" stroke="#ffffff" stroke-width="2.2" opacity="0.85"/>
<rect x="1335.8" y="435.8" width="15.5" height="15.5" fill="none" stroke="#ffffff" stroke-width="2.2" opacity="0.85"/>
<rect x="1456.8" y="564.5" width="15.5" height="15.5" fill="none" stroke="#ffffff" stroke-width="2.2" opacity="0.85"/>
<rect x="1530.2" y="319.2" width="15.5" height="15.5" fill="none" stroke="#ffffff" stroke-width="2.2" opacity="0.85"/>
<rect x="1432.2" y="441.6" width="15.5" height="15.5" fill="none" stroke="#1a1a1a" stroke-width="2.8" opacity="0.90"/>
<circle cx="1740.9" cy="461.4" r="5" fill="#000" fill-opacity=".18" stroke="#000" stroke-opacity=".72" stroke-width="2"/>
<circle cx="1424.4" cy="267.4" r="5" fill="#000" fill-opacity=".18" stroke="#000" stroke-opacity=".72" stroke-width="2"/>
<circle cx="1297.2" cy="635.8" r="5" fill="#000" fill-opacity=".18" stroke="#000" stroke-opacity=".72" stroke-width="2"/>
<circle cx="1351.8" cy="480.0" r="5" fill="#000" fill-opacity=".18" stroke="#000" stroke-opacity=".72" stroke-width="2"/>
<circle cx="1438.7" cy="580.6" r="5" fill="#000" fill-opacity=".18" stroke="#000" stroke-opacity=".72" stroke-width="2"/>
<circle cx="1539.6" cy="336.8" r="5" fill="#000" fill-opacity=".18" stroke="#000" stroke-opacity=".72" stroke-width="2"/>
<circle cx="1414.4" cy="485.3" r="5" fill="#c8c8c0" stroke="#333" stroke-width="1.6"/>
<circle cx="1417.1" cy="482.7" r="5" fill="#ffffff" stroke="#333" stroke-width="1.6"/>
<rect x="1765.5" y="242.5" width="16.0" height="16.0" fill="none" stroke="#111" stroke-width="3.0" opacity="0.95"/>
<g clip-path="url(#clIns)"><circle cx="1706" cy="348" r="5" fill="#c8c8c0" stroke="#333" stroke-width="1.6"/>
<circle cx="1715" cy="340.2" r="5" fill="#ffffff" stroke="#333" stroke-width="1.6"/></g><defs><linearGradient id="g_bb" x1="0" y1="0" x2="0" y2="1"><stop offset="0" stop-color="#2a2aff"/><stop offset=".55" stop-color="#0000f0"/><stop offset="1" stop-color="#000070"/></linearGradient><linearGradient id="g_btn" x1="0" y1="0" x2="0" y2="1"><stop offset="0" stop-color="#a4a4a4"/><stop offset=".12" stop-color="#8e8e8e"/><stop offset=".7" stop-color="#7a7a7a"/><stop offset="1" stop-color="#555"/></linearGradient><linearGradient id="g_bar" x1="0" y1="0" x2="0" y2="1"><stop offset="0" stop-color="#474747"/><stop offset="1" stop-color="#252525"/></linearGradient></defs><text x="17.6" y="768" font-size="31" fill="#f2f2f2" textLength="251.4" lengthAdjust="spacingAndGlyphs">Current Reading</text>
<text x="17.6" y="813.0" font-size="26" fill="#f0f0f0" textLength="117.4" lengthAdjust="spacingAndGlyphs">x: 0.2871</text>
<text x="17.6" y="856.0" font-size="26" fill="#f0f0f0" textLength="118.1" lengthAdjust="spacingAndGlyphs">y: 0.2992</text>
<text x="17.6" y="899.4" font-size="26" fill="#f0f0f0" textLength="126.8" lengthAdjust="spacingAndGlyphs">fL: 114.05</text>
<text x="17.6" y="942.5" font-size="26" fill="#f0f0f0" textLength="183.0" lengthAdjust="spacingAndGlyphs">cd/m²: 390.78</text>
<text class="ttl" x="489.3" y="741.9" textLength="95.6" lengthAdjust="spacingAndGlyphs">RGB Balance</text>
<rect x="406.8" y="746.4" width="291.4" height="190.4" fill="#232323"/>
<path d="M401 767.0 H698.2" class="grid"/>
<text class="ax" x="400" y="772.5" text-anchor="end">40</text>
<path d="M401 805.6 H698.2" class="grid"/>
<text class="ax" x="400" y="811.1" text-anchor="end">20</text>
<path d="M401 843.1 H698.2" class="grid"/>
<text class="ax" x="400" y="848.6" text-anchor="end">0</text>
<path d="M401 882.5 H698.2" class="grid"/>
<text class="ax" x="400" y="888.0" text-anchor="end">-20</text>
<path d="M401 920.0 H698.2" class="grid"/>
<text class="ax" x="400" y="925.5" text-anchor="end">-40</text>
<rect x="435.7" y="843.1" width="78.7" height="3.8" fill="#a01010" stroke="#111" stroke-width="1"/>
<rect x="515.6" y="843.1" width="76.8" height="8.6" fill="#10a010" stroke="#111" stroke-width="1"/>
<rect x="593.2" y="750.5" width="78" height="92.6" fill="url(#g_bb)" stroke="#111" stroke-width="1"/>
<path d="M406.8 943 V746.4 H698.2 V943" class="grid"/>
<path d="M406.8 936.8 H698.2" class="grid"/>
<text class="ax" x="553" y="955.6" text-anchor="middle">100W</text>
<rect x="723.7" y="722.9" width="796.9" height="20.6" fill="#2b2b2b"/>
<rect x="740" y="743.5" width="780.6" height="19.3" fill="#141414"/>
<rect x="723.7" y="722.9" width="16.3" height="39.9" fill="#080808"/>
<rect x="740" y="762.8" width="780.6" height="38.7" fill="#3c3c3c"/>
<rect x="723.7" y="762.8" width="16.3" height="38.7" fill="#262626"/>
<rect x="740" y="801.5" width="780.6" height="38.9" fill="#7a7a7a"/>
<rect x="723.7" y="801.5" width="16.3" height="38.9" fill="#2a2a2a"/>
<rect x="740" y="840.4" width="780.6" height="38.0" fill="#3c3c3c"/>
<rect x="723.7" y="840.4" width="16.3" height="38.0" fill="#262626"/>
<rect x="740" y="878.4" width="780.6" height="38.8" fill="#7a7a7a"/>
<rect x="723.7" y="878.4" width="16.3" height="38.8" fill="#2a2a2a"/>
<rect x="740" y="917.2" width="780.6" height="37.6" fill="#3c3c3c"/>
<rect x="723.7" y="917.2" width="16.3" height="37.6" fill="#262626"/>
<text transform="translate(827.8 751.0) scale(0.860 1)" font-size="21" fill="#f2f2f2" stroke="#f2f2f2" stroke-width=".45">White</text>
<text transform="translate(918.6 751.0) scale(0.860 1)" font-size="21" fill="#f2f2f2" stroke="#f2f2f2" stroke-width=".45">Red</text>
<text transform="translate(999.5 751.0) scale(0.860 1)" font-size="21" fill="#f2f2f2" stroke="#f2f2f2" stroke-width=".45">Green</text>
<text transform="translate(1090.5 751.0) scale(0.860 1)" font-size="21" fill="#f2f2f2" stroke="#f2f2f2" stroke-width=".45">Blue</text>
<text transform="translate(1170.2 751.0) scale(0.860 1)" font-size="21" fill="#f2f2f2" stroke="#f2f2f2" stroke-width=".45">Cyan</text>
<text transform="translate(1262.0 751.0) scale(0.860 1)" font-size="21" fill="#f2f2f2" stroke="#f2f2f2" stroke-width=".45">Magenta</text>
<text transform="translate(1343.8 751.0) scale(0.860 1)" font-size="21" fill="#f2f2f2" stroke="#f2f2f2" stroke-width=".45">Yellow</text>
<text transform="translate(1435.6 751.0) scale(0.860 1)" font-size="21" fill="#f2f2f2" stroke="#f2f2f2" stroke-width=".45">100W</text>
<text transform="translate(744.6 792.0) scale(0.770 1)" font-size="23" fill="#f2f2f2">x: CIE31</text>
<text transform="translate(827.8 792.0) scale(0.810 1)" font-size="23" fill="#f2f2f2">0.2841</text>
<text transform="translate(918.6 792.0) scale(0.810 1)" font-size="23" fill="#f2f2f2">0.6526</text>
<text transform="translate(999.5 792.0) scale(0.810 1)" font-size="23" fill="#f2f2f2">0.2954</text>
<text transform="translate(1090.5 792.0) scale(0.810 1)" font-size="23" fill="#f2f2f2">0.1518</text>
<text transform="translate(1170.2 792.0) scale(0.810 1)" font-size="23" fill="#f2f2f2">0.2134</text>
<text transform="translate(1262.0 792.0) scale(0.810 1)" font-size="23" fill="#f2f2f2">0.3115</text>
<text transform="translate(1343.8 792.0) scale(0.810 1)" font-size="23" fill="#f2f2f2">0.4254</text>
<text transform="translate(1435.6 792.0) scale(0.810 1)" font-size="23" fill="#f2f2f2">0.2871</text>
<text transform="translate(744.6 830.7) scale(0.770 1)" font-size="23" fill="#f2f2f2">y: CIE31</text>
<text transform="translate(827.8 830.7) scale(0.810 1)" font-size="23" fill="#f2f2f2">0.2950</text>
<text transform="translate(918.6 830.7) scale(0.810 1)" font-size="23" fill="#f2f2f2">0.3336</text>
<text transform="translate(999.5 830.7) scale(0.810 1)" font-size="23" fill="#f2f2f2">0.6462</text>
<text transform="translate(1090.5 830.7) scale(0.810 1)" font-size="23" fill="#f2f2f2">0.0525</text>
<text transform="translate(1170.2 830.7) scale(0.810 1)" font-size="23" fill="#f2f2f2">0.3035</text>
<text transform="translate(1262.0 830.7) scale(0.810 1)" font-size="23" fill="#f2f2f2">0.1415</text>
<text transform="translate(1343.8 830.7) scale(0.810 1)" font-size="23" fill="#f2f2f2">0.5343</text>
<text transform="translate(1435.6 830.7) scale(0.810 1)" font-size="23" fill="#f2f2f2">0.2992</text>
<text transform="translate(744.6 869.6) scale(0.770 1)" font-size="23" fill="#f2f2f2">Y</text>
<text transform="translate(827.8 869.6) scale(0.810 1)" font-size="23" fill="#f2f2f2">204.3509</text>
<text transform="translate(918.6 869.6) scale(0.810 1)" font-size="23" fill="#f2f2f2">42.1644</text>
<text transform="translate(999.5 869.6) scale(0.810 1)" font-size="23" fill="#f2f2f2">148.8561</text>
<text transform="translate(1090.5 869.6) scale(0.810 1)" font-size="23" fill="#f2f2f2">18.3314</text>
<text transform="translate(1170.2 869.6) scale(0.810 1)" font-size="23" fill="#f2f2f2">162.9789</text>
<text transform="translate(1262.0 869.6) scale(0.810 1)" font-size="23" fill="#f2f2f2">59.4048</text>
<text transform="translate(1343.8 869.6) scale(0.810 1)" font-size="23" fill="#f2f2f2">188.8429</text>
<text transform="translate(1435.6 869.6) scale(0.810 1)" font-size="23" fill="#f2f2f2">390.7781</text>
<text transform="translate(744.6 907.6) scale(0.770 1)" font-size="23" fill="#f2f2f2">Target Y</text>
<text transform="translate(827.8 907.6) scale(0.810 1)" font-size="23" fill="#f2f2f2">204.3509</text>
<text transform="translate(918.6 907.6) scale(0.810 1)" font-size="23" fill="#f2f2f2">42.8196</text>
<text transform="translate(999.5 907.6) scale(0.810 1)" font-size="23" fill="#f2f2f2">147.4425</text>
<text transform="translate(1090.5 907.6) scale(0.810 1)" font-size="23" fill="#f2f2f2">14.0888</text>
<text transform="translate(1170.2 907.6) scale(0.810 1)" font-size="23" fill="#f2f2f2">161.5313</text>
<text transform="translate(1262.0 907.6) scale(0.810 1)" font-size="23" fill="#f2f2f2">56.9084</text>
<text transform="translate(1343.8 907.6) scale(0.810 1)" font-size="23" fill="#f2f2f2">190.2622</text>
<text transform="translate(1435.6 907.6) scale(0.810 1)" font-size="23" fill="#f2f2f2">390.7781</text>
<text transform="translate(744.6 946.4) scale(0.770 1)" font-size="23" fill="#f2f2f2">ΔE 2000</text>
<text transform="translate(827.8 946.4) scale(0.810 1)" font-size="23" fill="#f2f2f2">16.9027</text>
<text transform="translate(918.6 946.4) scale(0.810 1)" font-size="23" fill="#f2f2f2">2.1961</text>
<text transform="translate(999.5 946.4) scale(0.810 1)" font-size="23" fill="#f2f2f2">3.3206</text>
<text transform="translate(1090.5 946.4) scale(0.810 1)" font-size="23" fill="#f2f2f2">4.9966</text>
<text transform="translate(1170.2 946.4) scale(0.810 1)" font-size="23" fill="#f2f2f2">14.1563</text>
<text transform="translate(1262.0 946.4) scale(0.810 1)" font-size="23" fill="#f2f2f2">3.0606</text>
<text transform="translate(1343.8 946.4) scale(0.810 1)" font-size="23" fill="#f2f2f2">1.9181</text>
<text transform="translate(1435.6 946.4) scale(0.810 1)" font-size="23" fill="#f2f2f2">18.3402</text>
<rect x="0" y="963" width="1920" height="72" fill="#2e2e2e"/>
<rect x="1366.5" y="963.4" width="190" height="71.6" fill="url(#g_bar)"/>
<rect x="1.9" y="965.3" width="167.7" height="72" rx="5" fill="url(#g_btn)" stroke="#3a3a3a" stroke-width="1"/>
<rect x="8.1" y="972.5" width="157.5" height="40" rx="4" fill="#a8a8a8"/>
<rect x="8.9" y="973.3" width="156" height="38.4" rx="3.5" fill="#c2c2c2"/>
<text x="85.7" y="1029" font-size="11.5" font-weight="bold" fill="#2e2e2e" text-anchor="middle">White</text>
<rect x="173.0" y="965.3" width="167.7" height="72" rx="5" fill="url(#g_btn)" stroke="#3a3a3a" stroke-width="1"/>
<rect x="179.2" y="972.5" width="157.5" height="40" rx="4" fill="#a8a8a8"/>
<rect x="180.0" y="973.3" width="156" height="38.4" rx="3.5" fill="#c00000"/>
<text x="256.8" y="1029" font-size="11.5" font-weight="bold" fill="#2e2e2e" text-anchor="middle">Red</text>
<rect x="344.0" y="965.3" width="167.7" height="72" rx="5" fill="url(#g_btn)" stroke="#3a3a3a" stroke-width="1"/>
<rect x="350.2" y="972.5" width="157.5" height="40" rx="4" fill="#a8a8a8"/>
<rect x="351.0" y="973.3" width="156" height="38.4" rx="3.5" fill="#00c000"/>
<text x="427.8" y="1029" font-size="11.5" font-weight="bold" fill="#2e2e2e" text-anchor="middle">Green</text>
<rect x="515.1" y="965.3" width="167.7" height="72" rx="5" fill="url(#g_btn)" stroke="#3a3a3a" stroke-width="1"/>
<rect x="521.3" y="972.5" width="157.5" height="40" rx="4" fill="#a8a8a8"/>
<rect x="522.1" y="973.3" width="156" height="38.4" rx="3.5" fill="#0000c0"/>
<text x="598.9" y="1029" font-size="11.5" font-weight="bold" fill="#2e2e2e" text-anchor="middle">Blue</text>
<rect x="686.1" y="965.3" width="167.7" height="72" rx="5" fill="url(#g_btn)" stroke="#3a3a3a" stroke-width="1"/>
<rect x="692.3" y="972.5" width="157.5" height="40" rx="4" fill="#a8a8a8"/>
<rect x="693.1" y="973.3" width="156" height="38.4" rx="3.5" fill="#00c0c0"/>
<text x="769.9" y="1029" font-size="11.5" font-weight="bold" fill="#2e2e2e" text-anchor="middle">Cyan</text>
<rect x="857.1" y="965.3" width="167.7" height="72" rx="5" fill="url(#g_btn)" stroke="#3a3a3a" stroke-width="1"/>
<rect x="863.4" y="972.5" width="157.5" height="40" rx="4" fill="#a8a8a8"/>
<rect x="864.1" y="973.3" width="156" height="38.4" rx="3.5" fill="#c000c0"/>
<text x="940.9" y="1029" font-size="11.5" font-weight="bold" fill="#2e2e2e" text-anchor="middle">Magenta</text>
<rect x="1028.2" y="965.3" width="167.7" height="72" rx="5" fill="url(#g_btn)" stroke="#3a3a3a" stroke-width="1"/>
<rect x="1034.4" y="972.5" width="157.5" height="40" rx="4" fill="#a8a8a8"/>
<rect x="1035.2" y="973.3" width="156" height="38.4" rx="3.5" fill="#c0c000"/>
<text x="1112.0" y="1029" font-size="11.5" font-weight="bold" fill="#2e2e2e" text-anchor="middle">Yellow</text>
<rect x="1199.3" y="963.4" width="167" height="72" fill="#1e1e1e"/>
<rect x="1203.8" y="970.7" width="158" height="41.3" rx="4" fill="#ffffff"/>
<text x="1282.7" y="1029" font-size="11.5" font-weight="bold" fill="#ffffff" text-anchor="middle">100W</text><defs><linearGradient id="g_dd" x1="0" y1="0" x2="0" y2="1"><stop offset="0" stop-color="#555"/><stop offset="1" stop-color="#707070"/></linearGradient><linearGradient id="g_tb" x1="0" y1="0" x2="0" y2="1"><stop offset="0" stop-color="#a0a0a0"/><stop offset=".5" stop-color="#7e7e7e"/><stop offset="1" stop-color="#5e5e5e"/></linearGradient><linearGradient id="g_ddc" x1="0" y1="0" x2="0" y2="1"><stop offset="0" stop-color="#4e4e4e"/><stop offset=".75" stop-color="#5c5c5c"/><stop offset="1" stop-color="#727272"/></linearGradient><linearGradient id="g_cb" x1="0" y1="0" x2="0" y2="1"><stop offset="0" stop-color="#b8b8b8"/><stop offset="1" stop-color="#8a8a8a"/></linearGradient><linearGradient id="g_nb" x1="0" y1="0" x2="0" y2="1"><stop offset="0" stop-color="#bdbdbd"/><stop offset=".5" stop-color="#a8a8a8"/><stop offset="1" stop-color="#909090"/></linearGradient></defs><path d="M1323.3 65.3 H1480.4 a4 4 0 0 1 4 4 V98.4 H1323.3 Z" fill="url(#g_dd)"/>
<rect x="1323.3" y="65.3" width="7.5" height="33.1" rx="1.5" fill="#22dd22"/>
<text x="1333.3" y="78.5" font-size="12" fill="#e8e8e8" textLength="118" lengthAdjust="spacingAndGlyphs">X-Rite i1Display Retail</text>
<text x="1333.3" y="95.0" font-size="12" fill="#e8e8e8" textLength="57" lengthAdjust="spacingAndGlyphs">LCD (LED)</text>
<circle cx="1465.9" cy="81.5" r="10.5" fill="url(#g_ddc)"/>
<path d="M1460.4 79 h11 l-5.5 5.5z" fill="#f4f4f4"/>
<path d="M1491.5 65.3 H1632.7 a4 4 0 0 1 4 4 V98.4 H1491.5 Z" fill="url(#g_dd)"/>
<rect x="1491.5" y="65.3" width="7.5" height="33.1" rx="1.5" fill="#22dd22"/>
<text x="1501.5" y="78.5" font-size="12" fill="#e8e8e8" textLength="72" lengthAdjust="spacingAndGlyphs">Mobile Forge</text>
<circle cx="1618.2" cy="81.5" r="10.5" fill="url(#g_ddc)"/>
<path d="M1612.7 79 h11 l-5.5 5.5z" fill="#f4f4f4"/>
<path d="M1644.4 65.3 H1801.5 a4 4 0 0 1 4 4 V98.4 H1644.4 Z" fill="url(#g_dd)"/>
<rect x="1644.4" y="65.3" width="7.5" height="33.1" rx="1.5" fill="#eeee00"/>
<text x="1654.4" y="78.5" font-size="12" fill="#e8e8e8" textLength="119" lengthAdjust="spacingAndGlyphs">Direct Display Control</text>
<circle cx="1787.0" cy="81.5" r="10.5" fill="url(#g_ddc)"/>
<path d="M1781.5 79 h11 l-5.5 5.5z" fill="#f4f4f4"/>
<rect x="1808.9" y="65.2" width="38.4" height="32.1" rx="4" fill="url(#g_tb)" stroke="#9a9a9a" stroke-width="1"/>
<circle cx="1828.1" cy="81.3" r="11" fill="#6c6c6c"/>
<rect x="1850.5" y="65.2" width="37.0" height="32.1" rx="4" fill="url(#g_tb)" stroke="#9a9a9a" stroke-width="1"/>
<circle cx="1869.0" cy="81.3" r="11" fill="#6c6c6c"/>
<rect x="1890.2" y="65.2" width="39.3" height="32.1" rx="4" fill="url(#g_tb)" stroke="#9a9a9a" stroke-width="1"/>
<circle cx="1905.0" cy="81.3" r="11" fill="#6c6c6c"/>
<path d="M1835.7 79.8L1835.7 82.8L1833.8 83.3L1833.5 83.9L1834.6 85.6L1832.4 87.8L1830.7 86.7L1830.1 87.0L1829.6 88.9L1826.6 88.9L1826.1 87.0L1825.5 86.7L1823.8 87.8L1821.6 85.6L1822.7 83.9L1822.4 83.3L1820.5 82.8L1820.5 79.8L1822.4 79.3L1822.7 78.7L1821.6 77.0L1823.8 74.8L1825.5 75.9L1826.1 75.6L1826.6 73.7L1829.6 73.7L1830.1 75.6L1830.7 75.9L1832.4 74.8L1834.6 77.0L1833.5 78.7L1833.8 79.3Z" fill="#f0f0f0"/>
<circle cx="1828.1" cy="81.3" r="4" fill="#6c6c6c"/>
<text x="1869" y="89" font-size="21" font-weight="bold" fill="#f4f4f4" text-anchor="middle">?</text>
<path d="M1905 75.5 L1898 81.5 L1905 87.5Z" fill="#f4f4f4"/>
<rect x="1556.5" y="963.4" width="363.5" height="71.6" fill="#2a2a2a"/>
<rect x="1557" y="965.8" width="53.7" height="69.2" rx="4" fill="url(#g_cb)"/>
<rect x="1557" y="985.5" width="53.7" height="1.5" fill="#7a7a7a"/>
<circle cx="1583.8" cy="975" r="8" fill="#a0a0a0"/>
<path d="M1579 978 h9.5 l-4.75 -5z" fill="#333"/>
<rect x="1567.5" y="994.8" width="32.2" height="31.2" rx="3" fill="#c4c4c4" stroke="#222" stroke-width="2.4"/>
<rect x="1576" y="1003" width="16" height="15" fill="#0a0a0a"/>
<rect x="1612.6" y="966" width="253.3" height="32.3" rx="3" fill="url(#g_cb)"/>
<rect x="1663.2" y="966" width="1.5" height="32.3" fill="#6a6a6a"/>
<rect x="1713.5" y="966" width="1.5" height="32.3" fill="#6a6a6a"/>
<rect x="1764.2" y="966" width="1.5" height="32.3" fill="#6a6a6a"/>
<rect x="1815.0" y="966" width="1.5" height="32.3" fill="#6a6a6a"/>
<circle cx="1637.6" cy="982" r="10" fill="#9c9c9c"/>
<circle cx="1690.0" cy="982" r="10" fill="#9c9c9c"/>
<circle cx="1740.0" cy="982" r="10" fill="#9c9c9c"/>
<circle cx="1791.0" cy="982" r="10" fill="#9c9c9c"/>
<circle cx="1841.0" cy="982" r="10" fill="#9c9c9c"/>
<rect x="1633.5" y="978" width="8" height="8" fill="#222"/>
<path d="M1686.5 976 L1695 982 L1686.5 988Z" fill="#222"/>
<path d="M1736.5 975.5 h-2.5 v13 h2.5 M1743.5 975.5 h2.5 v13 h-2.5" fill="none" stroke="#2a2a2a" stroke-width="2.2"/>
<path d="M1737.8 982 h4.4" stroke="#2a2a2a" stroke-width="1.3"/>
<path d="M1791 982 c-2.5 -3.2 -7 -3.2 -7 0 c0 3.2 4.5 3.2 7 0 c2.5 -3.2 7 -3.2 7 0 c0 3.2 -4.5 3.2 -7 0z" fill="none" stroke="#2a2a2a" stroke-width="2.2"/>
<path d="M1835.5 980.5 a5.8 5.8 0 0 1 10 -2.2 M1846.5 983.5 a5.8 5.8 0 0 1 -10 2.2" fill="none" stroke="#2a2a2a" stroke-width="2.4"/>
<path d="M1843 976 l4.5 -1 l-0.5 5z M1839 988 l-4.5 1 l0.5 -5z" fill="#2a2a2a"/>
<rect x="1866" y="966" width="54" height="32.3" fill="#2e2e2e"/>
<circle cx="1891.6" cy="982" r="10" fill="#333"/>
<rect x="1612.6" y="1001" width="305" height="36" rx="3" fill="url(#g_nb)"/>
<rect x="1765" y="1001" width="1.5" height="34" fill="#7a7a7a"/>
<circle cx="1646.5" cy="1017.3" r="10" fill="#b0b0b0"/>
<circle cx="1887.5" cy="1017.3" r="10" fill="#b0b0b0"/>
<text x="1646.5" y="1023" font-size="17" font-weight="bold" fill="#444" text-anchor="middle">«</text>
<text x="1887.5" y="1023" font-size="17" font-weight="bold" fill="#444" text-anchor="middle">»</text>
<text x="1676.3" y="1026" font-size="24" fill="#2a2a2a" textLength="56.7" lengthAdjust="spacingAndGlyphs">Back</text>
<text x="1796.8" y="1026" font-size="24" fill="#2a2a2a" textLength="58.2" lengthAdjust="spacingAndGlyphs">Next</text>

</svg>
</body></html>
